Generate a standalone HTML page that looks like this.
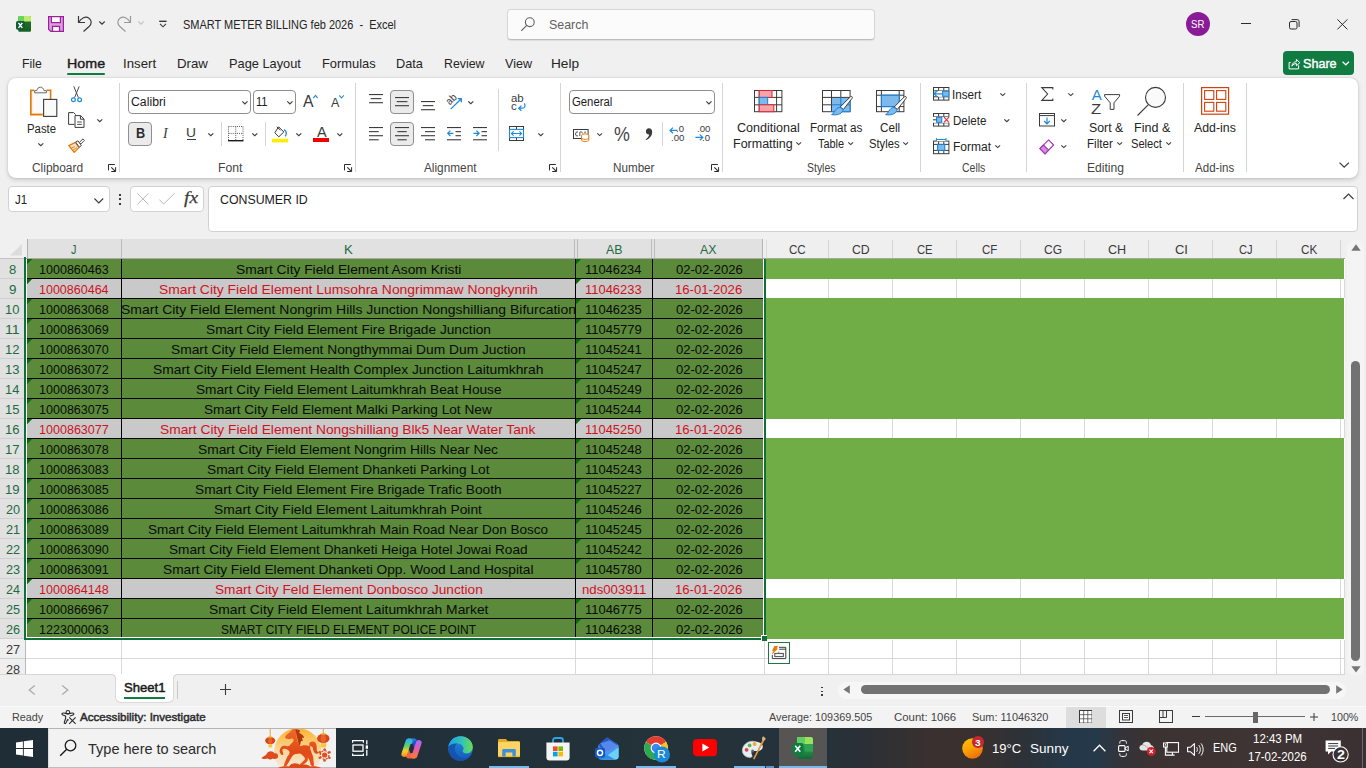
<!DOCTYPE html>
<html><head><meta charset="utf-8"><title>SMART METER BILLING feb 2026 - Excel</title>
<style>
html,body{margin:0;padding:0}
body{width:1366px;height:768px;overflow:hidden;position:relative;background:#f0f0f0;font-family:"Liberation Sans",sans-serif;}
.t{position:absolute;white-space:nowrap;line-height:1;transform-origin:0 50%;}
.r{position:absolute;box-sizing:border-box;}
svg{overflow:visible}
</style></head><body>
<svg class="r" style="left:16px;top:16px;" width="15" height="16" viewBox="0 0 15 16"><defs><linearGradient id="xs" x1="0" y1="0" x2="0" y2="1"><stop offset="0" stop-color="#25732f"/><stop offset="1" stop-color="#17601f"/></linearGradient></defs><path d="M2.200 1.600C2.200 .6 2.800 0 3.800 0H13.400C14.400 0 15 .6 15 1.600V14.200C15 15.200 14.400 15.800 13.400 15.800H3.800C2.800 15.800 2.200 15.200 2.200 14.200z" fill="url(#xs)"/><path d="M2.200 1.600C2.200 .6 2.800 0 3.800 0H8V5.400H2.200z" fill="#6bd45a"/><path d="M8 0H13.400C14.400 0 15 .6 15 1.600V5.400H8z" fill="#bdec70"/><rect x="0" y="5" width="8.800" height="8.800" rx="1.700" fill="#0f5c36"/><path d="M2.500 6.900L6.300 11.900M6.300 6.900L2.500 11.900" stroke="#fff" stroke-width="1.500"/></svg>
<svg class="r" style="left:48px;top:16px;" width="16" height="16" viewBox="0 0 16 16"><path d="M.6 .6H15.400V15.400H2.800L.6 13.200z" fill="#dc9be0" stroke="#9a1f9a" stroke-width="1.200"/><rect x="3.400" y=".6" width="9" height="6" fill="#fbfbfb" stroke="#9a1f9a" stroke-width="1.200"/><rect x="4.500" y="10.400" width="7" height="5" fill="#fbfbfb" stroke="#9a1f9a" stroke-width="1.200"/></svg>
<svg class="r" style="left:77px;top:15px;" width="16" height="17" viewBox="0 0 16 17"><path d="M1.5 1v6.5H8" fill="none" stroke="#3b3b3b" stroke-width="1.2"/><path d="M1.8 7.3C4 3 8.5 .8 12 3.2c3 2.2 2.6 5.6 .4 8L6.5 16.5" fill="none" stroke="#3b3b3b" stroke-width="1.2"/></svg>
<svg class="r" style="left:98.5px;top:21px;" width="6" height="4" viewBox="0 0 6 4"><path d="M.3 .5L3 3.2 5.7 .5" fill="none" stroke="#3b3b3b" stroke-width="1.1"/></svg>
<svg class="r" style="left:116px;top:15px;" width="16" height="17" viewBox="0 0 16 17"><path d="M14.5 1v6.5H8" fill="none" stroke="#999" stroke-width="1.2"/><path d="M14.2 7.3C12 3 7.5 .8 4 3.2c-3 2.2-2.6 5.6-.4 8L9.5 16.5" fill="none" stroke="#999" stroke-width="1.2"/></svg>
<svg class="r" style="left:137.7px;top:21px;" width="6" height="4" viewBox="0 0 6 4"><path d="M.3 .5L3 3.2 5.7 .5" fill="none" stroke="#c4c4c4" stroke-width="1.1"/></svg>
<svg class="r" style="left:159px;top:20px;" width="8" height="8" viewBox="0 0 8 8"><path d="M.2 1.300h7.400" stroke="#2b2b2b" stroke-width="1.300"/><path d="M1 3.8L4 6.8 7 3.8" fill="none" stroke="#3b3b3b" stroke-width="1.1"/></svg>
<span class="t" style="left:182.53px;top:18.00px;font-size:13px;color:#242424;transform:scaleX(0.8438);white-space:pre;">SMART METER BILLING feb 2026  -  Excel</span>
<div class="r" style="left:507px;top:9px;width:368px;height:30.5px;background:#fbfbfb;border:1px solid #d6d6d6;border-bottom-color:#bdbdbd;border-radius:4px;box-shadow:0 1px 1px rgba(0,0,0,.08);"></div>
<svg class="r" style="left:520px;top:16px;" width="16" height="16" viewBox="0 0 16 16"><circle cx="9.8" cy="6.2" r="4.4" fill="none" stroke="#616161" stroke-width="1.1"/><path d="M6.7 9.4L1.3 14.8" stroke="#616161" stroke-width="1.2"/></svg>
<span class="t" style="left:548.96px;top:18.00px;font-size:13px;color:#616161;transform:scaleX(0.9539);">Search</span>
<div class="r" style="left:1186px;top:12px;width:24px;height:24px;background:#8a1b97;border-radius:50%;"></div>
<span class="t" style="left:1191.33px;top:20.00px;font-size:10px;color:#fff;transform:scaleX(0.9582);">SR</span>
<div class="r" style="left:1241px;top:23px;width:10px;height:1px;background:#2b2b2b;"></div>
<svg class="r" style="left:1288.5px;top:18.5px;" width="11" height="11" viewBox="0 0 11 11"><rect x=".5" y="2.5" width="7.5" height="7.5" rx="1.5" fill="none" stroke="#2b2b2b" stroke-width="1"/><path d="M2.6 .6H8.2a1.9 1.9 0 0 1 1.9 1.9V8" fill="none" stroke="#2b2b2b" stroke-width="1"/></svg>
<svg class="r" style="left:1337px;top:18.5px;" width="11" height="11" viewBox="0 0 11 11"><path d="M.4 .4L10.4 10.4M10.4 .4L.4 10.4" stroke="#2b2b2b" stroke-width="1"/></svg>
<div class="r" style="left:1283px;top:51px;width:71px;height:24px;background:#107c41;border-radius:4px;"></div>
<svg class="r" style="left:1287.5px;top:56.5px;" width="13" height="13" viewBox="0 0 13 13"><path d="M2.7 5.5H1.1V11.9H10.6V8.3" fill="none" stroke="#fff" stroke-width="1"/><path d="M3.9 9.2C4.3 6.3 6 4.8 8.4 4.7V2.4L11.9 5.6 8.4 8.8V6.6C6.6 6.5 5 7.4 3.9 9.2z" fill="none" stroke="#fff" stroke-width="1" stroke-linejoin="round"/></svg>
<span class="t" style="left:1303.46px;top:57.00px;font-size:13px;color:#fff;transform:scaleX(0.9677);-webkit-text-stroke:.4px #fff;">Share</span>
<svg class="r" style="left:1342px;top:61px;" width="8" height="5" viewBox="0 0 8 5"><path d="M.6 .7L3.8 3.8 7 .7" fill="none" stroke="#fff" stroke-width="1.2"/></svg>
<span class="t" style="left:21.90px;top:57.00px;font-size:13px;color:#242424;transform:scaleX(0.9409);">File</span>
<span class="t" style="left:123.49px;top:57.00px;font-size:13px;color:#242424;transform:scaleX(1.0168);">Insert</span>
<span class="t" style="left:176.72px;top:57.00px;font-size:13px;color:#242424;transform:scaleX(1.0197);">Draw</span>
<span class="t" style="left:228.55px;top:57.00px;font-size:13px;color:#242424;transform:scaleX(0.9848);">Page Layout</span>
<span class="t" style="left:321.75px;top:57.00px;font-size:13px;color:#242424;transform:scaleX(0.9909);">Formulas</span>
<span class="t" style="left:395.96px;top:57.00px;font-size:13px;color:#242424;transform:scaleX(0.9804);">Data</span>
<span class="t" style="left:443.89px;top:57.00px;font-size:13px;color:#242424;transform:scaleX(0.9493);">Review</span>
<span class="t" style="left:504.60px;top:57.00px;font-size:13px;color:#242424;transform:scaleX(0.9646);">View</span>
<span class="t" style="left:550.68px;top:57.00px;font-size:13px;color:#242424;transform:scaleX(1.0505);">Help</span>
<span class="t" style="left:66.83px;top:57.00px;font-size:13px;color:#1b1b1b;transform:scaleX(1.0976);-webkit-text-stroke:.38px #1b1b1b;">Home</span>
<div class="r" style="left:67px;top:73px;width:38px;height:2px;background:#107c41;border-radius:1px;"></div>
<div class="r" style="left:8px;top:78px;width:1350px;height:100px;background:#ffffff;border-radius:8px;box-shadow:0 1.500px 4px rgba(0,0,0,.17),0 0 1.500px rgba(0,0,0,.14);"></div>
<div class="r" style="left:119px;top:83px;width:1px;height:89px;background:#d4d4d4;"></div>
<div class="r" style="left:355px;top:83px;width:1px;height:89px;background:#d4d4d4;"></div>
<div class="r" style="left:560px;top:83px;width:1px;height:89px;background:#d4d4d4;"></div>
<div class="r" style="left:722px;top:83px;width:1px;height:89px;background:#d4d4d4;"></div>
<div class="r" style="left:920px;top:83px;width:1px;height:89px;background:#d4d4d4;"></div>
<div class="r" style="left:1026px;top:83px;width:1px;height:89px;background:#d4d4d4;"></div>
<div class="r" style="left:1183px;top:83px;width:1px;height:89px;background:#d4d4d4;"></div>
<div class="r" style="left:1246px;top:83px;width:1px;height:89px;background:#d4d4d4;"></div>
<span class="t" style="left:31.94px;top:162.00px;font-size:12px;color:#444444;transform:scaleX(0.9947);">Clipboard</span>
<span class="t" style="left:217.55px;top:162.00px;font-size:12px;color:#444444;transform:scaleX(1.0178);">Font</span>
<span class="t" style="left:424.30px;top:162.00px;font-size:12px;color:#444444;transform:scaleX(0.9835);">Alignment</span>
<span class="t" style="left:612.69px;top:162.00px;font-size:12px;color:#444444;transform:scaleX(0.9721);">Number</span>
<span class="t" style="left:807.16px;top:162.00px;font-size:12px;color:#444444;transform:scaleX(0.8710);">Styles</span>
<span class="t" style="left:962.41px;top:162.00px;font-size:12px;color:#444444;transform:scaleX(0.8743);">Cells</span>
<span class="t" style="left:1086.95px;top:162.00px;font-size:12px;color:#444444;transform:scaleX(1.0081);">Editing</span>
<span class="t" style="left:1195.30px;top:162.00px;font-size:12px;color:#444444;transform:scaleX(0.9625);">Add-ins</span>
<svg class="r" style="left:108px;top:164px;" width="8" height="8" viewBox="0 0 8 8"><path d="M.5 6.400V.5H6.800" fill="none" stroke="#2b2b2b" stroke-width="1"/><path d="M3.300 3.400L7.400 7.400" stroke="#2b2b2b" stroke-width="1.100"/><path d="M7.600 3.200V7.500H3.200" fill="none" stroke="#2b2b2b" stroke-width="1"/></svg>
<svg class="r" style="left:344px;top:164px;" width="8" height="8" viewBox="0 0 8 8"><path d="M.5 6.400V.5H6.800" fill="none" stroke="#2b2b2b" stroke-width="1"/><path d="M3.300 3.400L7.400 7.400" stroke="#2b2b2b" stroke-width="1.100"/><path d="M7.600 3.200V7.500H3.200" fill="none" stroke="#2b2b2b" stroke-width="1"/></svg>
<svg class="r" style="left:549px;top:164px;" width="8" height="8" viewBox="0 0 8 8"><path d="M.5 6.400V.5H6.800" fill="none" stroke="#2b2b2b" stroke-width="1"/><path d="M3.300 3.400L7.400 7.400" stroke="#2b2b2b" stroke-width="1.100"/><path d="M7.600 3.200V7.500H3.200" fill="none" stroke="#2b2b2b" stroke-width="1"/></svg>
<svg class="r" style="left:711px;top:164px;" width="8" height="8" viewBox="0 0 8 8"><path d="M.5 6.400V.5H6.800" fill="none" stroke="#2b2b2b" stroke-width="1"/><path d="M3.300 3.400L7.400 7.400" stroke="#2b2b2b" stroke-width="1.100"/><path d="M7.600 3.200V7.500H3.200" fill="none" stroke="#2b2b2b" stroke-width="1"/></svg>
<svg class="r" style="left:30px;top:86px;" width="28" height="32" viewBox="0 0 28 32"><path d="M4 4.200H.8V28.600H12.800" fill="#fbe3b0" stroke="#e07a10" stroke-width="1.600"/><path d="M17 4.200H20.600V13" fill="none" stroke="#e07a10" stroke-width="1.600"/><rect x="2.400" y="6" width="10.600" height="21" fill="#fafafa"/><path d="M4.600 6.800V4.600H6.800C7.200 2.600 8.400 1.200 10.400 1.200 12.400 1.200 13.600 2.600 14 4.600H16.600V6.800z" fill="#fafafa" stroke="#6a6a6a" stroke-width="1"/><rect x="13.600" y="13.400" width="13.200" height="17" fill="#fafafa" stroke="#3b3b3b" stroke-width="1.100"/></svg>
<span class="t" style="left:26.61px;top:123.00px;font-size:12px;color:#242424;transform:scaleX(0.9466);">Paste</span>
<svg class="r" style="left:37.7px;top:143px;" width="5.6" height="3" viewBox="0 0 5.6 3"><path d="M.3 .3L2.8 2.7L5.3 .3" fill="none" stroke="#3b3b3b" stroke-width="1.1"/></svg>
<svg class="r" style="left:70.5px;top:86px;" width="11" height="16.5" viewBox="0 0 11 16.5"><path d="M2.800 .4L7.400 11.600M8.200 .4L3.600 11.600" stroke="#4a4a4a" stroke-width="1"/><circle cx="2.400" cy="13.800" r="1.900" fill="none" stroke="#1e8ad6" stroke-width="1.200"/><circle cx="8.600" cy="13.800" r="1.900" fill="none" stroke="#1e8ad6" stroke-width="1.200"/></svg>
<svg class="r" style="left:67.5px;top:112px;" width="17" height="16" viewBox="0 0 17 16"><path d="M6.400 12.400H.6V.6H5.600L7.600 2.600" fill="none" stroke="#3b3b3b" stroke-width="1"/><path d="M7 3.600H12.600L16 7V15.400H7z" fill="#fff" stroke="#3b3b3b" stroke-width="1"/><path d="M12.400 3.800V7.200H15.800" fill="none" stroke="#3b3b3b" stroke-width="1"/><path d="M9.200 10H13.800M9.200 12.400H13.800" stroke="#3b3b3b" stroke-width=".9"/></svg>
<svg class="r" style="left:96.7px;top:119.3px;" width="5.6" height="3" viewBox="0 0 5.6 3"><path d="M.3 .3L2.8 2.7L5.3 .3" fill="none" stroke="#3b3b3b" stroke-width="1.1"/></svg>
<svg class="r" style="left:68px;top:138px;" width="17" height="15" viewBox="0 0 17 15"><path d="M.8 7.600L7.400 4.400 11 9.600 6.200 14.400z" fill="#fbe3c8" stroke="#e07a10" stroke-width="1.300" stroke-linejoin="round"/><path d="M3 10.200L7 8.600M4.600 12.400L9 9.600" stroke="#e07a10" stroke-width=".9"/><path d="M7.600 4L10 2.800 13.400 7.600 11.200 9.200z" fill="#fff" stroke="#4a4a4a" stroke-width="1"/><path d="M11.400 4.400L15 .8 16.400 2.400 12.800 6z" fill="#fff" stroke="#4a4a4a" stroke-width="1"/></svg>
<div class="r" style="left:128px;top:90px;width:123px;height:24px;background:#fff;border:1px solid #8f8f8f;border-radius:4px;"></div>
<span class="t" style="left:131.12px;top:96.00px;font-size:12px;color:#1b1b1b;transform:scaleX(1.0228);">Calibri</span>
<svg class="r" style="left:241.7px;top:101px;" width="5.8" height="3.2" viewBox="0 0 5.8 3.2"><path d="M.3 .3L2.9 2.9L5.5 .3" fill="none" stroke="#3b3b3b" stroke-width="1.1"/></svg>
<div class="r" style="left:253px;top:90px;width:43px;height:24px;background:#fff;border:1px solid #8f8f8f;border-radius:4px;"></div>
<span class="t" style="left:255.99px;top:96.00px;font-size:12px;color:#1b1b1b;transform:scaleX(0.9245);">11</span>
<svg class="r" style="left:286.5px;top:101px;" width="5.8" height="3.2" viewBox="0 0 5.8 3.2"><path d="M.3 .3L2.9 2.9L5.5 .3" fill="none" stroke="#3b3b3b" stroke-width="1.1"/></svg>
<span class="t" style="left:303.30px;top:93.00px;font-size:16.5px;color:#3b3b3b;transform:scaleX(0.9562);">A</span>
<svg class="r" style="left:313.2px;top:95px;" width="5" height="3.4" viewBox="0 0 5 3.4"><path d="M.3 3.100L2.500 .4 4.700 3.100" fill="none" stroke="#1e8ad6" stroke-width="1.100"/></svg>
<span class="t" style="left:330.60px;top:96.00px;font-size:13.3px;color:#3b3b3b;transform:scaleX(0.9465);">A</span>
<svg class="r" style="left:338.8px;top:95px;" width="5" height="3.4" viewBox="0 0 5 3.4"><path d="M.3 .3L2.500 3 4.700 .3" fill="none" stroke="#1e8ad6" stroke-width="1.100"/></svg>
<div class="r" style="left:128px;top:122px;width:24px;height:24px;background:#ebebeb;border:1px solid #8f8f8f;border-radius:4px;"></div>
<span class="t" style="left:135.61px;top:126.00px;font-size:14px;color:#2b2b2b;transform:scaleX(0.9043);font-weight:bold;">B</span>
<span class="t" style="left:163.06px;top:127.00px;font-size:14px;color:#3b3b3b;font-family:'Liberation Serif',serif;font-style:italic;">I</span>
<span class="t" style="left:186.39px;top:127.00px;font-size:12px;color:#3b3b3b;transform:scaleX(1.1491);">U</span>
<div class="r" style="left:187.4px;top:139px;width:8.6px;height:1px;background:#3b3b3b;"></div>
<svg class="r" style="left:207.7px;top:133px;" width="5.6" height="3" viewBox="0 0 5.6 3"><path d="M.3 .3L2.8 2.7L5.3 .3" fill="none" stroke="#3b3b3b" stroke-width="1.1"/></svg>
<div class="r" style="left:221px;top:122px;width:1px;height:24px;background:#d4d4d4;"></div>
<svg class="r" style="left:228px;top:125.5px;" width="15.5" height="15.5" viewBox="0 0 15.5 15.5"><path d="M.5 .5H15M.5 .5V14M15 .5V14M7.750 .5V14M.5 7.400H15" fill="none" stroke="#5a5a5a" stroke-width="1" stroke-dasharray="1 1.100"/><path d="M0 14.700H15.500" stroke="#1b1b1b" stroke-width="1.400"/></svg>
<svg class="r" style="left:251.6px;top:133px;" width="5.6" height="3" viewBox="0 0 5.6 3"><path d="M.3 .3L2.8 2.7L5.3 .3" fill="none" stroke="#3b3b3b" stroke-width="1.1"/></svg>
<div class="r" style="left:265px;top:122px;width:1px;height:24px;background:#d4d4d4;"></div>
<svg class="r" style="left:272px;top:125.5px;" width="16.5" height="16.5" viewBox="0 0 16.5 16.5"><path d="M6.600 .8L11.800 6 6.800 10.800 2.800 6.800z" fill="#fff" stroke="#3b3b3b" stroke-width="1"/><path d="M4.800 .8L8.400 4.200" stroke="#3b3b3b" stroke-width="1"/><path d="M12 3.600C14.400 5 14.600 8 13.400 10.400" fill="none" stroke="#1e8ad6" stroke-width="1.300"/><rect x="0" y="12.800" width="16.200" height="3.600" fill="#ffee00"/></svg>
<svg class="r" style="left:295.5px;top:133px;" width="5.6" height="3" viewBox="0 0 5.6 3"><path d="M.3 .3L2.8 2.7L5.3 .3" fill="none" stroke="#3b3b3b" stroke-width="1.1"/></svg>
<span class="t" style="left:316.50px;top:125.00px;font-size:14.5px;color:#3b3b3b;transform:scaleX(1.0013);">A</span>
<div class="r" style="left:313px;top:138.2px;width:16px;height:3.6px;background:#f20000;"></div>
<svg class="r" style="left:336.6px;top:133px;" width="5.6" height="3" viewBox="0 0 5.6 3"><path d="M.3 .3L2.8 2.7L5.3 .3" fill="none" stroke="#3b3b3b" stroke-width="1.1"/></svg>
<div class="r" style="left:390px;top:90px;width:24px;height:24px;background:#ebebeb;border:1px solid #8f8f8f;border-radius:4px;"></div>
<div class="r" style="left:390px;top:122px;width:24px;height:24px;background:#ebebeb;border:1px solid #8f8f8f;border-radius:4px;"></div>
<svg class="r" style="left:369px;top:93.8px;" width="15" height="18" viewBox="0 0 15 18"><path d="M0 0.55H14" stroke="#3b3b3b" stroke-width="1.100"/><path d="M1.7 4.63H12.4" stroke="#3b3b3b" stroke-width="1.100"/><path d="M0 8.71H14" stroke="#3b3b3b" stroke-width="1.100"/></svg>
<svg class="r" style="left:395px;top:96.9px;" width="15" height="18" viewBox="0 0 15 18"><path d="M0 0.55H14" stroke="#3b3b3b" stroke-width="1.100"/><path d="M1.7 4.63H12.4" stroke="#3b3b3b" stroke-width="1.100"/><path d="M0 8.71H14" stroke="#3b3b3b" stroke-width="1.100"/></svg>
<svg class="r" style="left:421.2px;top:101px;" width="15" height="18" viewBox="0 0 15 18"><path d="M0 0.55H14" stroke="#3b3b3b" stroke-width="1.100"/><path d="M1.7 4.63H12.4" stroke="#3b3b3b" stroke-width="1.100"/><path d="M0 8.71H14" stroke="#3b3b3b" stroke-width="1.100"/></svg>
<svg class="r" style="left:369px;top:126.8px;" width="15" height="18" viewBox="0 0 15 18"><path d="M0 0.55H14" stroke="#3b3b3b" stroke-width="1.100"/><path d="M0 4.63H9.7" stroke="#3b3b3b" stroke-width="1.100"/><path d="M0 8.71H14" stroke="#3b3b3b" stroke-width="1.100"/><path d="M0 12.79H9.7" stroke="#3b3b3b" stroke-width="1.100"/></svg>
<svg class="r" style="left:395px;top:126.8px;" width="15" height="18" viewBox="0 0 15 18"><path d="M0 0.55H14" stroke="#3b3b3b" stroke-width="1.100"/><path d="M2.4 4.63H11.7" stroke="#3b3b3b" stroke-width="1.100"/><path d="M0 8.71H14" stroke="#3b3b3b" stroke-width="1.100"/><path d="M2.4 12.79H11.7" stroke="#3b3b3b" stroke-width="1.100"/></svg>
<svg class="r" style="left:421.2px;top:126.8px;" width="15" height="18" viewBox="0 0 15 18"><path d="M0 0.55H14" stroke="#3b3b3b" stroke-width="1.100"/><path d="M4 4.63H14" stroke="#3b3b3b" stroke-width="1.100"/><path d="M0 8.71H14" stroke="#3b3b3b" stroke-width="1.100"/><path d="M4 12.79H14" stroke="#3b3b3b" stroke-width="1.100"/></svg>
<svg class="r" style="left:447px;top:126.8px;" width="15" height="18" viewBox="0 0 15 18"><path d="M0 0.55H14" stroke="#3b3b3b" stroke-width="1.100"/><path d="M8.5 4.63H14" stroke="#3b3b3b" stroke-width="1.100"/><path d="M8.5 8.71H14" stroke="#3b3b3b" stroke-width="1.100"/><path d="M0 12.79H14" stroke="#3b3b3b" stroke-width="1.100"/></svg>
<svg class="r" style="left:447px;top:130.3px;" width="7" height="7" viewBox="0 0 7 7"><path d="M6.400 3.300H.8M3.400 .6L.7 3.300 3.400 6" fill="none" stroke="#1e8ad6" stroke-width="1.200"/></svg>
<svg class="r" style="left:473.1px;top:126.8px;" width="15" height="18" viewBox="0 0 15 18"><path d="M0 0.55H14" stroke="#3b3b3b" stroke-width="1.100"/><path d="M8.5 4.63H14" stroke="#3b3b3b" stroke-width="1.100"/><path d="M8.5 8.71H14" stroke="#3b3b3b" stroke-width="1.100"/><path d="M0 12.79H14" stroke="#3b3b3b" stroke-width="1.100"/></svg>
<svg class="r" style="left:473px;top:130.3px;" width="7" height="7" viewBox="0 0 7 7"><path d="M.4 3.300H6M3.400 .6L6.100 3.300 3.400 6" fill="none" stroke="#1e8ad6" stroke-width="1.200"/></svg>
<span class="t" style="left:451.300px;top:99.300px;font-size:10.500px;color:#3b3b3b;transform:translate(-50%,-50%) rotate(-45deg) scaleX(.92);transform-origin:50% 50%;">ab</span>
<svg class="r" style="left:449.8px;top:97.5px;" width="12" height="12" viewBox="0 0 12 12"><path d="M.7 11.100L11.300 .7M7.800 .7H11.300V4.200" fill="none" stroke="#1e8ad6" stroke-width="1.300"/></svg>
<svg class="r" style="left:467.5px;top:100.7px;" width="5.6" height="3" viewBox="0 0 5.6 3"><path d="M.3 .3L2.8 2.7L5.3 .3" fill="none" stroke="#3b3b3b" stroke-width="1.1"/></svg>
<div class="r" style="left:498px;top:89px;width:1px;height:62px;background:#d4d4d4;"></div>
<span class="t" style="left:510.62px;top:93.00px;font-size:10.5px;color:#3b3b3b;transform:scaleX(1.0886);">ab</span>
<span class="t" style="left:510.62px;top:101.00px;font-size:10.5px;color:#3b3b3b;transform:scaleX(1.0959);">c</span>
<svg class="r" style="left:517.5px;top:102.5px;" width="8" height="8" viewBox="0 0 8 8"><path d="M6.400 .4C7.600 2.600 7 5.200 4.400 5.200H.8M3.400 2.600L.7 5.200 3.400 7.800" fill="none" stroke="#1e8ad6" stroke-width="1.200"/></svg>
<svg class="r" style="left:509px;top:126px;" width="15" height="15" viewBox="0 0 15 15"><rect x=".5" y=".5" width="14" height="14" fill="none" stroke="#3b3b3b" stroke-width="1"/><path d="M7.500 .5V3.400M7.500 11.600V14.500" stroke="#3b3b3b" stroke-width="1"/><rect x=".5" y="3.400" width="14" height="8.200" fill="#fff" stroke="#1e8ad6" stroke-width="1.100"/><path d="M2.600 7.500H12.400M4.600 5.400L2.400 7.500 4.600 9.600M10.400 5.400L12.600 7.500 10.400 9.600" fill="none" stroke="#1e8ad6" stroke-width="1.100"/></svg>
<svg class="r" style="left:537.7px;top:133px;" width="5.6" height="3" viewBox="0 0 5.6 3"><path d="M.3 .3L2.8 2.7L5.3 .3" fill="none" stroke="#3b3b3b" stroke-width="1.1"/></svg>
<div class="r" style="left:569px;top:90px;width:146px;height:24px;background:#fff;border:1px solid #8f8f8f;border-radius:4px;"></div>
<span class="t" style="left:572.27px;top:96.00px;font-size:12px;color:#1b1b1b;transform:scaleX(0.9434);">General</span>
<svg class="r" style="left:705.5px;top:100.8px;" width="5.8" height="3.2" viewBox="0 0 5.8 3.2"><path d="M.3 .3L2.9 2.9L5.5 .3" fill="none" stroke="#3b3b3b" stroke-width="1.1"/></svg>
<svg class="r" style="left:573px;top:129px;" width="16.5" height="13" viewBox="0 0 16.5 13"><rect x=".5" y=".5" width="14.600" height="9" fill="#fff" stroke="#3b3b3b" stroke-width="1"/><path d="M5 3C3.400 2.400 2.600 3.600 2.600 5 2.600 6.400 3.400 7.400 5 6.800M6.800 7V3.200C8 2.600 9.400 2.800 9.400 4.400M11.200 3.200H13" fill="none" stroke="#3b3b3b" stroke-width=".9"/><ellipse cx="12.200" cy="6.400" rx="3.600" ry="1.500" fill="#fff" stroke="#e07a10" stroke-width="1"/><path d="M8.600 6.400V11C8.600 12 10.200 12.600 12.200 12.600 14.200 12.600 15.800 12 15.800 11V6.400M8.600 8.800C8.600 9.800 10.200 10.400 12.200 10.400 14.200 10.400 15.800 9.800 15.800 8.800" fill="#fff" stroke="#e07a10" stroke-width="1"/></svg>
<svg class="r" style="left:596.8px;top:133px;" width="5.4" height="2.9" viewBox="0 0 5.4 2.9"><path d="M.3 .3L2.7 2.6L5.1 .3" fill="none" stroke="#3b3b3b" stroke-width="1.1"/></svg>
<span class="t" style="left:614.24px;top:125.00px;font-size:19.5px;color:#444;transform:scaleX(0.9165);">%</span>
<svg class="r" style="left:644.8px;top:128px;" width="7.5" height="12.5" viewBox="0 0 7.5 12.5"><path d="M3.800 .3C6 .3 7.200 1.800 7.200 4 7.200 7.400 4.800 10.600 1 12L.6 11.200C2.800 10 4 8.400 4.200 6.600 2.400 6.800 .9 5.600 .9 3.600 .9 1.700 2.100 .3 3.800 .3z" fill="#3b3b3b"/></svg>
<div class="r" style="left:662px;top:122px;width:1px;height:24px;background:#d4d4d4;"></div>
<svg class="r" style="left:669px;top:126.8px;" width="16" height="14.5" viewBox="0 0 16 14.5"><path d="M8.400 3.400H1.200M4 .6L1 3.400 4 6.200" fill="none" stroke="#1e8ad6" stroke-width="1.200"/></svg>
<span class="t" style="left:676.46px;top:125.00px;font-size:8.5px;color:#3b3b3b;transform:scaleX(1.1241);">.0</span>
<span class="t" style="left:670.95px;top:134.00px;font-size:8.5px;color:#3b3b3b;transform:scaleX(1.1321);">.00</span>
<span class="t" style="left:696.95px;top:125.00px;font-size:8.5px;color:#3b3b3b;transform:scaleX(1.1321);">.00</span>
<svg class="r" style="left:695px;top:134.2px;" width="9" height="7" viewBox="0 0 9 7"><path d="M.4 3.400H7.600M4.800 .6L7.800 3.400 4.800 6.200" fill="none" stroke="#1e8ad6" stroke-width="1.200"/></svg>
<span class="t" style="left:702.16px;top:134.00px;font-size:8.5px;color:#3b3b3b;transform:scaleX(1.1241);">.0</span>
<svg class="r" style="left:754px;top:90px;" width="28" height="22" viewBox="0 0 28 22"><rect x=".5" y=".5" width="27.400" height="21.200" fill="#fff" stroke="#3b3b3b" stroke-width="1"/><path d="M5.200 .5V21.700M22.600 .5V21.700M.5 7.400H28M.5 14.800H28" stroke="#3b3b3b" stroke-width="1"/><rect x="5.200" y=".5" width="12.800" height="6.900" fill="#f7a3aa" stroke="#e32230" stroke-width="1"/><rect x="5.200" y="7.400" width="8.500" height="7.400" fill="#7cb9ec" stroke="#1a7fd4" stroke-width="1"/><rect x="5.200" y="14.800" width="14.600" height="6.900" fill="#f7a3aa" stroke="#e32230" stroke-width="1"/></svg>
<span class="t" style="left:736.81px;top:122.00px;font-size:12px;color:#242424;transform:scaleX(1.0445);">Conditional</span>
<span class="t" style="left:732.52px;top:138.00px;font-size:12px;color:#242424;transform:scaleX(1.0417);">Formatting</span>
<svg class="r" style="left:796px;top:142px;" width="5.4" height="2.9" viewBox="0 0 5.4 2.9"><path d="M.3 .3L2.7 2.6L5.1 .3" fill="none" stroke="#3b3b3b" stroke-width="1.1"/></svg>
<svg class="r" style="left:822px;top:90px;" width="31" height="27" viewBox="0 0 31 27"><rect x=".5" y=".5" width="27.600" height="21.200" fill="#fff" stroke="#3b3b3b" stroke-width="1"/><rect x="9.500" y="7.400" width="18.600" height="14.300" fill="#7cb9ec"/><path d="M9.500 .5V21.700M18.800 .5V7.400M.5 7.400H28M.5 14.800H9.500" stroke="#3b3b3b" stroke-width="1"/><path d="M18.800 7.400V21.700M9.500 14.800H28M9.500 21.700H28M28 7.400V21.700" stroke="#1a7fd4" stroke-width="1"/><path d="M28.600 6.600C29.600 6 30.800 7 30.200 8.200L21.400 19.400 18.200 17z" fill="#fff" stroke="#3b3b3b" stroke-width="1"/><path d="M18 17.200L21.200 19.600C20.600 23 16.600 25.800 9.600 24.600 12.600 23.600 12.400 18.400 18 17.200z" fill="#7cb9ec" stroke="#1a7fd4" stroke-width="1"/></svg>
<span class="t" style="left:809.79px;top:122.00px;font-size:12px;color:#242424;transform:scaleX(0.9678);">Format as</span>
<span class="t" style="left:818.17px;top:138.00px;font-size:12px;color:#242424;transform:scaleX(0.9087);">Table</span>
<svg class="r" style="left:848px;top:142px;" width="5.4" height="2.9" viewBox="0 0 5.4 2.9"><path d="M.3 .3L2.7 2.6L5.1 .3" fill="none" stroke="#3b3b3b" stroke-width="1.1"/></svg>
<svg class="r" style="left:876px;top:90px;" width="31" height="27" viewBox="0 0 31 27"><rect x=".5" y=".5" width="27.400" height="21.200" fill="#fff" stroke="#3b3b3b" stroke-width="1"/><path d="M5.400 .5V21.700M23.200 .5V21.700M.5 5.200H28M.5 16.600H28" stroke="#3b3b3b" stroke-width="1"/><rect x="5.400" y="5.200" width="17.800" height="11.400" fill="#7cb9ec" stroke="#1a7fd4" stroke-width="1.100"/><path d="M28.600 6.600C29.600 6 30.800 7 30.200 8.200L21.400 19.400 18.200 17z" fill="#fff" stroke="#3b3b3b" stroke-width="1"/><path d="M18 17.200L21.200 19.600C20.600 23 16.600 25.800 9.600 24.600 12.600 23.600 12.400 18.400 18 17.200z" fill="#7cb9ec" stroke="#1a7fd4" stroke-width="1"/></svg>
<span class="t" style="left:880.05px;top:122.00px;font-size:12px;color:#242424;transform:scaleX(0.9732);">Cell</span>
<span class="t" style="left:868.93px;top:138.00px;font-size:12px;color:#242424;transform:scaleX(0.9339);">Styles</span>
<svg class="r" style="left:902.9px;top:142px;" width="5.4" height="2.9" viewBox="0 0 5.4 2.9"><path d="M.3 .3L2.7 2.6L5.1 .3" fill="none" stroke="#3b3b3b" stroke-width="1.1"/></svg>
<svg class="r" style="left:932.9px;top:87.3px;" width="17" height="14" viewBox="0 0 17 14"><rect x=".5" y=".5" width="15.400" height="12.600" fill="#fff" stroke="#3b3b3b" stroke-width="1"/><path d="M5.600 .5V13M10.800 .5V13M.5 3.800H16M.5 9.800H16" stroke="#3b3b3b" stroke-width="1"/><rect x="5" y="3.800" width="11.400" height="6" fill="#fff"/><rect x="9.600" y="4.300" width="6.400" height="5" fill="#7cb9ec" stroke="#1a7fd4" stroke-width="1"/><path d="M9 6.800H1M3.800 4.200L1 6.800 3.800 9.400" fill="none" stroke="#1e8ad6" stroke-width="1.200"/></svg>
<span class="t" style="left:952.47px;top:89.00px;font-size:12px;color:#242424;transform:scaleX(0.9735);">Insert</span>
<svg class="r" style="left:999.5px;top:93px;" width="5.5" height="2.9" viewBox="0 0 5.5 2.9"><path d="M.3 .3L2.75 2.6L5.2 .3" fill="none" stroke="#3b3b3b" stroke-width="1.1"/></svg>
<svg class="r" style="left:932.9px;top:113.3px;" width="17" height="14" viewBox="0 0 17 14"><rect x=".5" y=".5" width="15.400" height="12.600" fill="#fff" stroke="#3b3b3b" stroke-width="1"/><path d="M5.600 .5V13M10.800 .5V13M.5 3.800H16M.5 9.800H16" stroke="#3b3b3b" stroke-width="1"/><rect x="-.5" y="3.800" width="17.500" height="6" fill="#fff"/><rect x="3.600" y="4.300" width="5.200" height="5" fill="#7cb9ec" stroke="#1a7fd4" stroke-width="1"/><path d="M0 6.800H3.600" stroke="#3b3b3b" stroke-width="1"/><path d="M11 4.200L16 9.400M16 4.200L11 9.400" stroke="#e8323c" stroke-width="1.200"/></svg>
<span class="t" style="left:952.90px;top:115.00px;font-size:12px;color:#242424;transform:scaleX(0.9620);">Delete</span>
<svg class="r" style="left:1003.5px;top:119px;" width="5.6" height="3" viewBox="0 0 5.6 3"><path d="M.3 .3L2.8 2.7L5.3 .3" fill="none" stroke="#3b3b3b" stroke-width="1.1"/></svg>
<svg class="r" style="left:932.9px;top:138.3px;" width="17" height="16" viewBox="0 0 17 16"><g transform="translate(0,2.600)"><rect x=".5" y=".5" width="15.400" height="12.600" fill="#fff" stroke="#3b3b3b" stroke-width="1"/><path d="M5.600 .5V13M10.800 .5V13M.5 3.800H16M.5 9.800H16" stroke="#3b3b3b" stroke-width="1"/></g><rect x="4.600" y="6.400" width="7.200" height="6" fill="#7cb9ec" stroke="#1a7fd4" stroke-width="1"/><rect x="3" y="0" width="10.600" height="3.200" fill="#fff"/><path d="M3.400 1.500H13M3.400 0V3M13 0V3" stroke="#1e8ad6" stroke-width="1"/></svg>
<span class="t" style="left:952.86px;top:141.00px;font-size:12px;color:#242424;transform:scaleX(1.0005);">Format</span>
<svg class="r" style="left:995px;top:144.9px;" width="5.4" height="2.9" viewBox="0 0 5.4 2.9"><path d="M.3 .3L2.7 2.6L5.1 .3" fill="none" stroke="#3b3b3b" stroke-width="1.1"/></svg>
<svg class="r" style="left:1041px;top:87px;" width="12.5" height="14" viewBox="0 0 12.5 14"><path d="M11.800 2.400V.6H.8L6.600 7 .8 13.400H11.800V11.600" fill="none" stroke="#3b3b3b" stroke-width="1.100"/></svg>
<svg class="r" style="left:1067.6px;top:93px;" width="5.6" height="2.9" viewBox="0 0 5.6 2.9"><path d="M.3 .3L2.8 2.6L5.3 .3" fill="none" stroke="#3b3b3b" stroke-width="1.1"/></svg>
<svg class="r" style="left:1039px;top:113.2px;" width="16" height="13.5" viewBox="0 0 16 13.5"><rect x=".5" y=".5" width="15" height="12.500" fill="#fff" stroke="#3b3b3b" stroke-width="1"/><path d="M.5 2.600H15.500" stroke="#3b3b3b" stroke-width="1"/><path d="M8 4.600V10.600M5.200 8L8 10.800 10.800 8" fill="none" stroke="#1e8ad6" stroke-width="1.200"/></svg>
<svg class="r" style="left:1060.8px;top:119px;" width="5.6" height="3" viewBox="0 0 5.6 3"><path d="M.3 .3L2.8 2.7L5.3 .3" fill="none" stroke="#3b3b3b" stroke-width="1.1"/></svg>
<svg class="r" style="left:1039px;top:138.5px;" width="15.5" height="15.5" viewBox="0 0 15.5 15.5"><path d="M9.600 .8L14.600 6 6 14.800 .9 9.600z" fill="#fff" stroke="#a535b4" stroke-width="1.100" stroke-linejoin="round"/><path d="M4.400 6L9.600 11.200 6 14.800 .9 9.600z" fill="#cf8edb" stroke="#a535b4" stroke-width="1.100" stroke-linejoin="round"/></svg>
<svg class="r" style="left:1060.8px;top:144.9px;" width="5.6" height="2.9" viewBox="0 0 5.6 2.9"><path d="M.3 .3L2.8 2.6L5.3 .3" fill="none" stroke="#3b3b3b" stroke-width="1.1"/></svg>
<span class="t" style="left:1091.80px;top:87.00px;font-size:15px;color:#1e8ad6;">A</span>
<span class="t" style="left:1091.32px;top:101.00px;font-size:15px;color:#3b3b3b;transform:scaleX(1.1068);">Z</span>
<svg class="r" style="left:1104.2px;top:94px;" width="16.2" height="16" viewBox="0 0 16.2 16"><path d="M.6 .6H15.600V2.200L10 8.800V15.400H6.200V8.800L.6 2.200z" fill="#fff" stroke="#3b3b3b" stroke-width="1"/></svg>
<span class="t" style="left:1088.69px;top:122.00px;font-size:12px;color:#242424;transform:scaleX(1.0270);">Sort &amp;</span>
<span class="t" style="left:1086.99px;top:138.00px;font-size:12px;color:#242424;transform:scaleX(0.9669);">Filter</span>
<svg class="r" style="left:1116.8px;top:142px;" width="5.4" height="2.9" viewBox="0 0 5.4 2.9"><path d="M.3 .3L2.7 2.6L5.1 .3" fill="none" stroke="#3b3b3b" stroke-width="1.1"/></svg>
<svg class="r" style="left:1137px;top:87px;" width="29" height="29" viewBox="0 0 29 29"><circle cx="18.500" cy="10.400" r="10" fill="#fafafa" stroke="#3b3b3b" stroke-width="1.100"/><path d="M11.400 17.600L.5 28.500" stroke="#3b3b3b" stroke-width="1.100"/></svg>
<span class="t" style="left:1133.62px;top:122.00px;font-size:12px;color:#242424;transform:scaleX(1.0471);">Find &amp;</span>
<span class="t" style="left:1130.84px;top:138.00px;font-size:12px;color:#242424;transform:scaleX(0.9277);">Select</span>
<svg class="r" style="left:1166px;top:142px;" width="5.4" height="2.9" viewBox="0 0 5.4 2.9"><path d="M.3 .3L2.7 2.6L5.1 .3" fill="none" stroke="#3b3b3b" stroke-width="1.1"/></svg>
<svg class="r" style="left:1200.8px;top:87px;" width="28.2" height="27.8" viewBox="0 0 28.2 27.8"><rect x=".6" y=".6" width="27" height="26.600" fill="#fff" stroke="#d1410c" stroke-width="1.200"/><rect x="3.600" y="3.600" width="9.200" height="8.800" fill="none" stroke="#d1410c" stroke-width="1.100"/><rect x="15.600" y="3.600" width="9.200" height="8.800" fill="none" stroke="#d1410c" stroke-width="1.100"/><rect x="3.600" y="15.400" width="9.200" height="8.800" fill="none" stroke="#d1410c" stroke-width="1.100"/><rect x="15.600" y="15.400" width="9.200" height="8.800" fill="none" stroke="#d1410c" stroke-width="1.100"/></svg>
<span class="t" style="left:1194.30px;top:122.00px;font-size:12px;color:#242424;transform:scaleX(1.0295);">Add-ins</span>
<svg class="r" style="left:1338.5px;top:162px;" width="10.5" height="6" viewBox="0 0 10.5 6"><path d="M.5 .6L5.200 5.200 10 .6" fill="none" stroke="#3b3b3b" stroke-width="1.200"/></svg>
<div class="r" style="left:8px;top:186px;width:102px;height:26px;background:#fff;border:1px solid #d2d2d2;border-radius:4px;"></div>
<span class="t" style="left:15.32px;top:194.00px;font-size:12px;color:#242424;transform:scaleX(0.9634);">J1</span>
<svg class="r" style="left:94px;top:197.5px;" width="10" height="6" viewBox="0 0 10 6"><path d="M.4 .5L4.8 5 9.2 .5" fill="none" stroke="#3b3b3b" stroke-width="1.1"/></svg>
<div class="r" style="left:119px;top:194px;width:2px;height:2px;background:#3b3b3b;"></div>
<div class="r" style="left:119px;top:198.3px;width:2px;height:2px;background:#3b3b3b;"></div>
<div class="r" style="left:119px;top:202.6px;width:2px;height:2px;background:#3b3b3b;"></div>
<div class="r" style="left:130px;top:186px;width:74px;height:26px;background:#fff;border:1px solid #d2d2d2;border-radius:4px;"></div>
<svg class="r" style="left:137.3px;top:193.2px;" width="12" height="12" viewBox="0 0 12 12"><path d="M.3 .3L11.5 11.5M11.5 .3L.3 11.5" stroke="#b9b9b9" stroke-width="1"/></svg>
<svg class="r" style="left:159px;top:193.2px;" width="16" height="12" viewBox="0 0 16 12"><path d="M.4 6.6L4.6 11 15.6 .4" fill="none" stroke="#b9b9b9" stroke-width="1"/></svg>
<span class="t" style="left:184.40px;top:189.00px;font-size:17px;color:#3b3b3b;transform:scaleX(1.1513);font-family:'Liberation Serif',serif;font-style:italic;-webkit-text-stroke:.25px #3b3b3b;">fx</span>
<div class="r" style="left:208px;top:186px;width:1150px;height:46px;background:#fff;border:1px solid #d2d2d2;border-radius:4px;"></div>
<span class="t" style="left:219.81px;top:193.00px;font-size:13px;color:#1b1b1b;transform:scaleX(0.9491);">CONSUMER ID</span>
<svg class="r" style="left:1343px;top:192.5px;" width="11" height="7" viewBox="0 0 11 7"><path d="M.5 6L5.5 1 10.5 6" fill="none" stroke="#3b3b3b" stroke-width="1.2"/></svg>
<div class="r" style="left:0px;top:239px;width:1345px;height:436px;background:#ffffff;"></div>
<div class="r" style="left:0px;top:239px;width:27px;height:20px;background:#f0f0f0;"></div>
<svg class="r" style="left:10px;top:243.5px;" width="12" height="11.5" viewBox="0 0 12 11.5"><path d="M12 0V11.5H0z" fill="#dcdcdc"/></svg>
<div class="r" style="left:28px;top:239px;width:734px;height:19px;background:#e1e1e1;"></div>
<div class="r" style="left:762px;top:239px;width:583px;height:19px;background:#efefef;"></div>
<div class="r" style="left:26px;top:258px;width:738px;height:1px;background:#aaa6aa;"></div>
<div class="r" style="left:764px;top:258px;width:581px;height:1px;background:#a6a6a6;"></div>
<div class="r" style="left:0px;top:258px;width:24px;height:1px;background:#c4c4c4;"></div>
<div class="r" style="left:27px;top:239px;width:1px;height:19px;background:#b0b0b0;"></div>
<div class="r" style="left:121px;top:239px;width:1px;height:19px;background:#bcbcbc;"></div>
<div class="r" style="left:574px;top:239px;width:1px;height:19px;background:#bcbcbc;"></div>
<div class="r" style="left:577px;top:239px;width:1px;height:19px;background:#bcbcbc;"></div>
<div class="r" style="left:651px;top:239px;width:1px;height:19px;background:#bcbcbc;"></div>
<div class="r" style="left:654px;top:239px;width:1px;height:19px;background:#bcbcbc;"></div>
<div class="r" style="left:762px;top:239px;width:1px;height:19px;background:#b4b4b4;"></div>
<div class="r" style="left:766px;top:240px;width:1px;height:18px;background:#dcdcdc;"></div>
<div class="r" style="left:828px;top:240px;width:1px;height:18px;background:#d4d4d4;"></div>
<div class="r" style="left:892px;top:240px;width:1px;height:18px;background:#d4d4d4;"></div>
<div class="r" style="left:956px;top:240px;width:1px;height:18px;background:#d4d4d4;"></div>
<div class="r" style="left:1020px;top:240px;width:1px;height:18px;background:#d4d4d4;"></div>
<div class="r" style="left:1084px;top:240px;width:1px;height:18px;background:#d4d4d4;"></div>
<div class="r" style="left:1148px;top:240px;width:1px;height:18px;background:#d4d4d4;"></div>
<div class="r" style="left:1212px;top:240px;width:1px;height:18px;background:#d4d4d4;"></div>
<div class="r" style="left:1276px;top:240px;width:1px;height:18px;background:#d4d4d4;"></div>
<div class="r" style="left:1340px;top:240px;width:1px;height:18px;background:#d4d4d4;"></div>
<span class="t" style="left:71.08px;top:244.00px;font-size:12px;color:#1e6b41;transform:scaleX(0.9114);">J</span>
<span class="t" style="left:343.67px;top:244.00px;font-size:12px;color:#1e6b41;transform:scaleX(1.0955);">K</span>
<span class="t" style="left:606.10px;top:244.00px;font-size:12px;color:#1e6b41;transform:scaleX(1.0274);">AB</span>
<span class="t" style="left:700.35px;top:244.00px;font-size:12px;color:#1e6b41;transform:scaleX(1.0306);">AX</span>
<span class="t" style="left:788.86px;top:244.00px;font-size:12px;color:#3a3a3a;transform:scaleX(0.9662);">CC</span>
<span class="t" style="left:852.42px;top:244.00px;font-size:12px;color:#3a3a3a;transform:scaleX(1.0229);">CD</span>
<span class="t" style="left:917.47px;top:244.00px;font-size:12px;color:#3a3a3a;transform:scaleX(0.9357);">CE</span>
<span class="t" style="left:981.61px;top:244.00px;font-size:12px;color:#3a3a3a;transform:scaleX(0.9547);">CF</span>
<span class="t" style="left:1044.44px;top:244.00px;font-size:12px;color:#3a3a3a;transform:scaleX(1.0036);">CG</span>
<span class="t" style="left:1108.41px;top:244.00px;font-size:12px;color:#3a3a3a;transform:scaleX(1.0512);">CH</span>
<span class="t" style="left:1175.09px;top:244.00px;font-size:12px;color:#3a3a3a;transform:scaleX(1.0818);">CI</span>
<span class="t" style="left:1238.68px;top:244.00px;font-size:12px;color:#3a3a3a;transform:scaleX(0.9223);">CJ</span>
<span class="t" style="left:1301.00px;top:244.00px;font-size:12px;color:#3a3a3a;transform:scaleX(0.9701);">CK</span>
<div class="r" style="left:0px;top:259px;width:24px;height:380px;background:#e1e1e1;"></div>
<div class="r" style="left:0px;top:639px;width:25px;height:36px;background:#efefef;"></div>
<div class="r" style="left:27px;top:259px;width:736px;height:19px;background:#5a8a3a;"></div>
<div class="r" style="left:766px;top:259px;width:578px;height:20px;background:#70ad47;"></div>
<span class="t" style="left:9.15px;top:264.00px;font-size:12px;color:#1e6b41;transform:scaleX(1.0901);">8</span>
<div class="r" style="left:0px;top:278px;width:24px;height:1px;background:#cfcfcf;"></div>
<span class="t" style="left:38.95px;top:263.00px;font-size:13px;color:#0a0a0a;transform:scaleX(0.9644);">1000860463</span>
<span class="t" style="left:235.60px;top:263.00px;font-size:13px;color:#0a0a0a;transform:scaleX(1.0609);">Smart City Field Element Asom Kristi</span>
<span class="t" style="left:585.47px;top:263.00px;font-size:13px;color:#0a0a0a;transform:scaleX(0.9931);">11046234</span>
<span class="t" style="left:675.65px;top:263.00px;font-size:13px;color:#0a0a0a;transform:scaleX(1.0037);">02-02-2026</span>
<svg class="r" style="left:27px;top:259px;" width="5" height="5" viewBox="0 0 5 5"><path d="M0 0H5.200L0 5.200z" fill="#056c08"/></svg>
<svg class="r" style="left:576px;top:259px;" width="5" height="5" viewBox="0 0 5 5"><path d="M0 0H5.200L0 5.200z" fill="#056c08"/></svg>
<div class="r" style="left:27px;top:278px;width:736px;height:1px;background:#000;"></div>
<div class="r" style="left:27px;top:279px;width:736px;height:19px;background:#c9c9c9;"></div>
<span class="t" style="left:9.07px;top:284.00px;font-size:12px;color:#1e6b41;transform:scaleX(1.1146);">9</span>
<div class="r" style="left:0px;top:298px;width:24px;height:1px;background:#cfcfcf;"></div>
<span class="t" style="left:38.95px;top:283.00px;font-size:13px;color:#d0121f;transform:scaleX(0.9619);">1000860464</span>
<span class="t" style="left:159.30px;top:283.00px;font-size:13px;color:#d0121f;transform:scaleX(1.0674);">Smart City Field Element Lumsohra Nongrimmaw Nongkynrih</span>
<span class="t" style="left:585.47px;top:283.00px;font-size:13px;color:#d0121f;transform:scaleX(0.9965);">11046233</span>
<span class="t" style="left:675.20px;top:283.00px;font-size:13px;color:#d0121f;transform:scaleX(1.0105);">16-01-2026</span>
<svg class="r" style="left:27px;top:279px;" width="5" height="5" viewBox="0 0 5 5"><path d="M0 0H5.200L0 5.200z" fill="#056c08"/></svg>
<svg class="r" style="left:576px;top:279px;" width="5" height="5" viewBox="0 0 5 5"><path d="M0 0H5.200L0 5.200z" fill="#056c08"/></svg>
<div class="r" style="left:27px;top:298px;width:736px;height:1px;background:#000;"></div>
<div class="r" style="left:27px;top:299px;width:736px;height:19px;background:#5a8a3a;"></div>
<div class="r" style="left:766px;top:298px;width:578px;height:21px;background:#70ad47;"></div>
<span class="t" style="left:5.36px;top:304.00px;font-size:12px;color:#1e6b41;transform:scaleX(1.0789);">10</span>
<div class="r" style="left:0px;top:318px;width:24px;height:1px;background:#cfcfcf;"></div>
<span class="t" style="left:38.95px;top:303.00px;font-size:13px;color:#0a0a0a;transform:scaleX(0.9644);">1000863068</span>
<div class="r" style="left:122px;top:299px;width:453px;height:19px;overflow:hidden">
<span class="t" style="left:-0.85px;top:4.00px;font-size:13px;color:#0a0a0a;transform:scaleX(1.0746);">Smart City Field Element Nongrim Hills Junction Nongshilliang Bifurcation</span>
</div>
<span class="t" style="left:585.47px;top:303.00px;font-size:13px;color:#0a0a0a;transform:scaleX(0.9965);">11046235</span>
<span class="t" style="left:675.65px;top:303.00px;font-size:13px;color:#0a0a0a;transform:scaleX(1.0037);">02-02-2026</span>
<svg class="r" style="left:27px;top:299px;" width="5" height="5" viewBox="0 0 5 5"><path d="M0 0H5.200L0 5.200z" fill="#056c08"/></svg>
<svg class="r" style="left:576px;top:299px;" width="5" height="5" viewBox="0 0 5 5"><path d="M0 0H5.200L0 5.200z" fill="#056c08"/></svg>
<div class="r" style="left:27px;top:318px;width:736px;height:1px;background:#000;"></div>
<div class="r" style="left:27px;top:319px;width:736px;height:19px;background:#5a8a3a;"></div>
<div class="r" style="left:766px;top:318px;width:578px;height:21px;background:#70ad47;"></div>
<span class="t" style="left:5.27px;top:324.00px;font-size:12px;color:#1e6b41;transform:scaleX(1.1783);">11</span>
<div class="r" style="left:0px;top:338px;width:24px;height:1px;background:#cfcfcf;"></div>
<span class="t" style="left:38.95px;top:323.00px;font-size:13px;color:#0a0a0a;transform:scaleX(0.9653);">1000863069</span>
<span class="t" style="left:206.16px;top:323.00px;font-size:13px;color:#0a0a0a;transform:scaleX(1.0545);">Smart City Field Element Fire Brigade Junction</span>
<span class="t" style="left:585.46px;top:323.00px;font-size:13px;color:#0a0a0a;transform:scaleX(0.9976);">11045779</span>
<span class="t" style="left:675.65px;top:323.00px;font-size:13px;color:#0a0a0a;transform:scaleX(1.0037);">02-02-2026</span>
<svg class="r" style="left:27px;top:319px;" width="5" height="5" viewBox="0 0 5 5"><path d="M0 0H5.200L0 5.200z" fill="#056c08"/></svg>
<svg class="r" style="left:576px;top:319px;" width="5" height="5" viewBox="0 0 5 5"><path d="M0 0H5.200L0 5.200z" fill="#056c08"/></svg>
<div class="r" style="left:27px;top:338px;width:736px;height:1px;background:#000;"></div>
<div class="r" style="left:27px;top:339px;width:736px;height:19px;background:#5a8a3a;"></div>
<div class="r" style="left:766px;top:338px;width:578px;height:21px;background:#70ad47;"></div>
<span class="t" style="left:5.35px;top:344.00px;font-size:12px;color:#1e6b41;transform:scaleX(1.0903);">12</span>
<div class="r" style="left:0px;top:358px;width:24px;height:1px;background:#cfcfcf;"></div>
<span class="t" style="left:38.95px;top:343.00px;font-size:13px;color:#0a0a0a;transform:scaleX(0.9636);">1000863070</span>
<span class="t" style="left:171.30px;top:343.00px;font-size:13px;color:#0a0a0a;transform:scaleX(1.0602);">Smart City Field Element Nongthymmai Dum Dum Juction</span>
<span class="t" style="left:585.46px;top:343.00px;font-size:13px;color:#0a0a0a;transform:scaleX(0.9976);">11045241</span>
<span class="t" style="left:675.65px;top:343.00px;font-size:13px;color:#0a0a0a;transform:scaleX(1.0037);">02-02-2026</span>
<svg class="r" style="left:27px;top:339px;" width="5" height="5" viewBox="0 0 5 5"><path d="M0 0H5.200L0 5.200z" fill="#056c08"/></svg>
<svg class="r" style="left:576px;top:339px;" width="5" height="5" viewBox="0 0 5 5"><path d="M0 0H5.200L0 5.200z" fill="#056c08"/></svg>
<div class="r" style="left:27px;top:358px;width:736px;height:1px;background:#000;"></div>
<div class="r" style="left:27px;top:359px;width:736px;height:19px;background:#5a8a3a;"></div>
<div class="r" style="left:766px;top:358px;width:578px;height:21px;background:#70ad47;"></div>
<span class="t" style="left:5.35px;top:364.00px;font-size:12px;color:#1e6b41;transform:scaleX(1.0846);">13</span>
<div class="r" style="left:0px;top:378px;width:24px;height:1px;background:#cfcfcf;"></div>
<span class="t" style="left:38.95px;top:363.00px;font-size:13px;color:#0a0a0a;transform:scaleX(0.9653);">1000863072</span>
<span class="t" style="left:153.45px;top:363.00px;font-size:13px;color:#0a0a0a;transform:scaleX(1.0635);">Smart City Field Element Health Complex Junction Laitumkhrah</span>
<span class="t" style="left:585.46px;top:363.00px;font-size:13px;color:#0a0a0a;transform:scaleX(0.9976);">11045247</span>
<span class="t" style="left:675.65px;top:363.00px;font-size:13px;color:#0a0a0a;transform:scaleX(1.0037);">02-02-2026</span>
<svg class="r" style="left:27px;top:359px;" width="5" height="5" viewBox="0 0 5 5"><path d="M0 0H5.200L0 5.200z" fill="#056c08"/></svg>
<svg class="r" style="left:576px;top:359px;" width="5" height="5" viewBox="0 0 5 5"><path d="M0 0H5.200L0 5.200z" fill="#056c08"/></svg>
<div class="r" style="left:27px;top:378px;width:736px;height:1px;background:#000;"></div>
<div class="r" style="left:27px;top:379px;width:736px;height:19px;background:#5a8a3a;"></div>
<div class="r" style="left:766px;top:378px;width:578px;height:21px;background:#70ad47;"></div>
<span class="t" style="left:5.37px;top:384.00px;font-size:12px;color:#1e6b41;transform:scaleX(1.0679);">14</span>
<div class="r" style="left:0px;top:398px;width:24px;height:1px;background:#cfcfcf;"></div>
<span class="t" style="left:38.95px;top:383.00px;font-size:13px;color:#0a0a0a;transform:scaleX(0.9644);">1000863073</span>
<span class="t" style="left:195.71px;top:383.00px;font-size:13px;color:#0a0a0a;transform:scaleX(1.0520);">Smart City Field Element Laitumkhrah Beat House</span>
<span class="t" style="left:585.46px;top:383.00px;font-size:13px;color:#0a0a0a;transform:scaleX(0.9976);">11045249</span>
<span class="t" style="left:675.65px;top:383.00px;font-size:13px;color:#0a0a0a;transform:scaleX(1.0037);">02-02-2026</span>
<svg class="r" style="left:27px;top:379px;" width="5" height="5" viewBox="0 0 5 5"><path d="M0 0H5.200L0 5.200z" fill="#056c08"/></svg>
<svg class="r" style="left:576px;top:379px;" width="5" height="5" viewBox="0 0 5 5"><path d="M0 0H5.200L0 5.200z" fill="#056c08"/></svg>
<div class="r" style="left:27px;top:398px;width:736px;height:1px;background:#000;"></div>
<div class="r" style="left:27px;top:399px;width:736px;height:19px;background:#5a8a3a;"></div>
<div class="r" style="left:766px;top:398px;width:578px;height:21px;background:#70ad47;"></div>
<span class="t" style="left:5.35px;top:404.00px;font-size:12px;color:#1e6b41;transform:scaleX(1.0846);">15</span>
<div class="r" style="left:0px;top:418px;width:24px;height:1px;background:#cfcfcf;"></div>
<span class="t" style="left:38.95px;top:403.00px;font-size:13px;color:#0a0a0a;transform:scaleX(0.9644);">1000863075</span>
<span class="t" style="left:204.31px;top:403.00px;font-size:13px;color:#0a0a0a;transform:scaleX(1.0509);">Smart City Feld Element Malki Parking Lot New</span>
<span class="t" style="left:585.47px;top:403.00px;font-size:13px;color:#0a0a0a;transform:scaleX(0.9931);">11045244</span>
<span class="t" style="left:675.65px;top:403.00px;font-size:13px;color:#0a0a0a;transform:scaleX(1.0037);">02-02-2026</span>
<svg class="r" style="left:27px;top:399px;" width="5" height="5" viewBox="0 0 5 5"><path d="M0 0H5.200L0 5.200z" fill="#056c08"/></svg>
<svg class="r" style="left:576px;top:399px;" width="5" height="5" viewBox="0 0 5 5"><path d="M0 0H5.200L0 5.200z" fill="#056c08"/></svg>
<div class="r" style="left:27px;top:418px;width:736px;height:1px;background:#000;"></div>
<div class="r" style="left:27px;top:419px;width:736px;height:19px;background:#c9c9c9;"></div>
<span class="t" style="left:5.35px;top:424.00px;font-size:12px;color:#1e6b41;transform:scaleX(1.0846);">16</span>
<div class="r" style="left:0px;top:438px;width:24px;height:1px;background:#cfcfcf;"></div>
<span class="t" style="left:38.95px;top:423.00px;font-size:13px;color:#d0121f;transform:scaleX(0.9653);">1000863077</span>
<span class="t" style="left:160.35px;top:423.00px;font-size:13px;color:#d0121f;transform:scaleX(1.0582);">Smart City Field Element Nongshilliang Blk5 Near Water Tank</span>
<span class="t" style="left:585.47px;top:423.00px;font-size:13px;color:#d0121f;transform:scaleX(0.9954);">11045250</span>
<span class="t" style="left:675.20px;top:423.00px;font-size:13px;color:#d0121f;transform:scaleX(1.0105);">16-01-2026</span>
<svg class="r" style="left:27px;top:419px;" width="5" height="5" viewBox="0 0 5 5"><path d="M0 0H5.200L0 5.200z" fill="#056c08"/></svg>
<svg class="r" style="left:576px;top:419px;" width="5" height="5" viewBox="0 0 5 5"><path d="M0 0H5.200L0 5.200z" fill="#056c08"/></svg>
<div class="r" style="left:27px;top:438px;width:736px;height:1px;background:#000;"></div>
<div class="r" style="left:27px;top:439px;width:736px;height:19px;background:#5a8a3a;"></div>
<div class="r" style="left:766px;top:438px;width:578px;height:21px;background:#70ad47;"></div>
<span class="t" style="left:5.35px;top:444.00px;font-size:12px;color:#1e6b41;transform:scaleX(1.0903);">17</span>
<div class="r" style="left:0px;top:458px;width:24px;height:1px;background:#cfcfcf;"></div>
<span class="t" style="left:38.95px;top:443.00px;font-size:13px;color:#0a0a0a;transform:scaleX(0.9644);">1000863078</span>
<span class="t" style="left:198.40px;top:443.00px;font-size:13px;color:#0a0a0a;transform:scaleX(1.0591);">Smart City Field Element Nongrim Hills Near Nec</span>
<span class="t" style="left:585.47px;top:443.00px;font-size:13px;color:#0a0a0a;transform:scaleX(0.9965);">11045248</span>
<span class="t" style="left:675.65px;top:443.00px;font-size:13px;color:#0a0a0a;transform:scaleX(1.0037);">02-02-2026</span>
<svg class="r" style="left:27px;top:439px;" width="5" height="5" viewBox="0 0 5 5"><path d="M0 0H5.200L0 5.200z" fill="#056c08"/></svg>
<svg class="r" style="left:576px;top:439px;" width="5" height="5" viewBox="0 0 5 5"><path d="M0 0H5.200L0 5.200z" fill="#056c08"/></svg>
<div class="r" style="left:27px;top:458px;width:736px;height:1px;background:#000;"></div>
<div class="r" style="left:27px;top:459px;width:736px;height:19px;background:#5a8a3a;"></div>
<div class="r" style="left:766px;top:458px;width:578px;height:21px;background:#70ad47;"></div>
<span class="t" style="left:5.35px;top:464.00px;font-size:12px;color:#1e6b41;transform:scaleX(1.0846);">18</span>
<div class="r" style="left:0px;top:478px;width:24px;height:1px;background:#cfcfcf;"></div>
<span class="t" style="left:38.95px;top:463.00px;font-size:13px;color:#0a0a0a;transform:scaleX(0.9644);">1000863083</span>
<span class="t" style="left:207.01px;top:463.00px;font-size:13px;color:#0a0a0a;transform:scaleX(1.0537);">Smart City Field Element Dhanketi Parking Lot</span>
<span class="t" style="left:585.47px;top:463.00px;font-size:13px;color:#0a0a0a;transform:scaleX(0.9965);">11045243</span>
<span class="t" style="left:675.65px;top:463.00px;font-size:13px;color:#0a0a0a;transform:scaleX(1.0037);">02-02-2026</span>
<svg class="r" style="left:27px;top:459px;" width="5" height="5" viewBox="0 0 5 5"><path d="M0 0H5.200L0 5.200z" fill="#056c08"/></svg>
<svg class="r" style="left:576px;top:459px;" width="5" height="5" viewBox="0 0 5 5"><path d="M0 0H5.200L0 5.200z" fill="#056c08"/></svg>
<div class="r" style="left:27px;top:478px;width:736px;height:1px;background:#000;"></div>
<div class="r" style="left:27px;top:479px;width:736px;height:19px;background:#5a8a3a;"></div>
<div class="r" style="left:766px;top:478px;width:578px;height:21px;background:#70ad47;"></div>
<span class="t" style="left:5.35px;top:484.00px;font-size:12px;color:#1e6b41;transform:scaleX(1.0903);">19</span>
<div class="r" style="left:0px;top:498px;width:24px;height:1px;background:#cfcfcf;"></div>
<span class="t" style="left:38.95px;top:483.00px;font-size:13px;color:#0a0a0a;transform:scaleX(0.9644);">1000863085</span>
<span class="t" style="left:195.21px;top:483.00px;font-size:13px;color:#0a0a0a;transform:scaleX(1.0530);">Smart City Field Element Fire Brigade Trafic Booth</span>
<span class="t" style="left:585.46px;top:483.00px;font-size:13px;color:#0a0a0a;transform:scaleX(0.9976);">11045227</span>
<span class="t" style="left:675.65px;top:483.00px;font-size:13px;color:#0a0a0a;transform:scaleX(1.0037);">02-02-2026</span>
<svg class="r" style="left:27px;top:479px;" width="5" height="5" viewBox="0 0 5 5"><path d="M0 0H5.200L0 5.200z" fill="#056c08"/></svg>
<svg class="r" style="left:576px;top:479px;" width="5" height="5" viewBox="0 0 5 5"><path d="M0 0H5.200L0 5.200z" fill="#056c08"/></svg>
<div class="r" style="left:27px;top:498px;width:736px;height:1px;background:#000;"></div>
<div class="r" style="left:27px;top:499px;width:736px;height:19px;background:#5a8a3a;"></div>
<div class="r" style="left:766px;top:498px;width:578px;height:21px;background:#70ad47;"></div>
<span class="t" style="left:5.71px;top:504.00px;font-size:12px;color:#1e6b41;transform:scaleX(1.0517);">20</span>
<div class="r" style="left:0px;top:518px;width:24px;height:1px;background:#cfcfcf;"></div>
<span class="t" style="left:38.95px;top:503.00px;font-size:13px;color:#0a0a0a;transform:scaleX(0.9644);">1000863086</span>
<span class="t" style="left:214.25px;top:503.00px;font-size:13px;color:#0a0a0a;transform:scaleX(1.0626);">Smart City Field Element Laitumkhrah Point</span>
<span class="t" style="left:585.47px;top:503.00px;font-size:13px;color:#0a0a0a;transform:scaleX(0.9965);">11045246</span>
<span class="t" style="left:675.65px;top:503.00px;font-size:13px;color:#0a0a0a;transform:scaleX(1.0037);">02-02-2026</span>
<svg class="r" style="left:27px;top:499px;" width="5" height="5" viewBox="0 0 5 5"><path d="M0 0H5.200L0 5.200z" fill="#056c08"/></svg>
<svg class="r" style="left:576px;top:499px;" width="5" height="5" viewBox="0 0 5 5"><path d="M0 0H5.200L0 5.200z" fill="#056c08"/></svg>
<div class="r" style="left:27px;top:518px;width:736px;height:1px;background:#000;"></div>
<div class="r" style="left:27px;top:519px;width:736px;height:19px;background:#5a8a3a;"></div>
<div class="r" style="left:766px;top:518px;width:578px;height:21px;background:#70ad47;"></div>
<span class="t" style="left:5.70px;top:524.00px;font-size:12px;color:#1e6b41;transform:scaleX(1.0624);">21</span>
<div class="r" style="left:0px;top:538px;width:24px;height:1px;background:#cfcfcf;"></div>
<span class="t" style="left:38.95px;top:523.00px;font-size:13px;color:#0a0a0a;transform:scaleX(0.9653);">1000863089</span>
<span class="t" style="left:148.41px;top:523.00px;font-size:13px;color:#0a0a0a;transform:scaleX(1.0410);">Smart City Field Element Laitumkhrah Main Road Near Don Bosco</span>
<span class="t" style="left:585.47px;top:523.00px;font-size:13px;color:#0a0a0a;transform:scaleX(0.9965);">11045245</span>
<span class="t" style="left:675.65px;top:523.00px;font-size:13px;color:#0a0a0a;transform:scaleX(1.0037);">02-02-2026</span>
<svg class="r" style="left:27px;top:519px;" width="5" height="5" viewBox="0 0 5 5"><path d="M0 0H5.200L0 5.200z" fill="#056c08"/></svg>
<svg class="r" style="left:576px;top:519px;" width="5" height="5" viewBox="0 0 5 5"><path d="M0 0H5.200L0 5.200z" fill="#056c08"/></svg>
<div class="r" style="left:27px;top:538px;width:736px;height:1px;background:#000;"></div>
<div class="r" style="left:27px;top:539px;width:736px;height:19px;background:#5a8a3a;"></div>
<div class="r" style="left:766px;top:538px;width:578px;height:21px;background:#70ad47;"></div>
<span class="t" style="left:5.70px;top:544.00px;font-size:12px;color:#1e6b41;transform:scaleX(1.0624);">22</span>
<div class="r" style="left:0px;top:558px;width:24px;height:1px;background:#cfcfcf;"></div>
<span class="t" style="left:38.95px;top:543.00px;font-size:13px;color:#0a0a0a;transform:scaleX(0.9636);">1000863090</span>
<span class="t" style="left:169.31px;top:543.00px;font-size:13px;color:#0a0a0a;transform:scaleX(1.0493);">Smart City Field Element Dhanketi Heiga Hotel Jowai Road</span>
<span class="t" style="left:585.46px;top:543.00px;font-size:13px;color:#0a0a0a;transform:scaleX(0.9976);">11045242</span>
<span class="t" style="left:675.65px;top:543.00px;font-size:13px;color:#0a0a0a;transform:scaleX(1.0037);">02-02-2026</span>
<svg class="r" style="left:27px;top:539px;" width="5" height="5" viewBox="0 0 5 5"><path d="M0 0H5.200L0 5.200z" fill="#056c08"/></svg>
<svg class="r" style="left:576px;top:539px;" width="5" height="5" viewBox="0 0 5 5"><path d="M0 0H5.200L0 5.200z" fill="#056c08"/></svg>
<div class="r" style="left:27px;top:558px;width:736px;height:1px;background:#000;"></div>
<div class="r" style="left:27px;top:559px;width:736px;height:19px;background:#5a8a3a;"></div>
<div class="r" style="left:766px;top:558px;width:578px;height:21px;background:#70ad47;"></div>
<span class="t" style="left:5.71px;top:564.00px;font-size:12px;color:#1e6b41;transform:scaleX(1.0570);">23</span>
<div class="r" style="left:0px;top:578px;width:24px;height:1px;background:#cfcfcf;"></div>
<span class="t" style="left:38.95px;top:563.00px;font-size:13px;color:#0a0a0a;transform:scaleX(0.9653);">1000863091</span>
<span class="t" style="left:163.41px;top:563.00px;font-size:13px;color:#0a0a0a;transform:scaleX(1.0557);">Smart City Field Element Dhanketi Opp. Wood Land Hospital</span>
<span class="t" style="left:585.47px;top:563.00px;font-size:13px;color:#0a0a0a;transform:scaleX(0.9954);">11045780</span>
<span class="t" style="left:675.65px;top:563.00px;font-size:13px;color:#0a0a0a;transform:scaleX(1.0037);">02-02-2026</span>
<svg class="r" style="left:27px;top:559px;" width="5" height="5" viewBox="0 0 5 5"><path d="M0 0H5.200L0 5.200z" fill="#056c08"/></svg>
<svg class="r" style="left:576px;top:559px;" width="5" height="5" viewBox="0 0 5 5"><path d="M0 0H5.200L0 5.200z" fill="#056c08"/></svg>
<div class="r" style="left:27px;top:578px;width:736px;height:1px;background:#000;"></div>
<div class="r" style="left:27px;top:579px;width:736px;height:19px;background:#c9c9c9;"></div>
<span class="t" style="left:5.71px;top:584.00px;font-size:12px;color:#1e6b41;transform:scaleX(1.0411);">24</span>
<div class="r" style="left:0px;top:598px;width:24px;height:1px;background:#cfcfcf;"></div>
<span class="t" style="left:38.95px;top:583.00px;font-size:13px;color:#d0121f;transform:scaleX(0.9644);">1000864148</span>
<span class="t" style="left:214.76px;top:583.00px;font-size:13px;color:#d0121f;transform:scaleX(1.0497);">Smart City Feld Element Donbosco Junction</span>
<span class="t" style="left:581.78px;top:583.00px;font-size:13px;color:#d0121f;transform:scaleX(1.0136);">nds003911</span>
<span class="t" style="left:675.20px;top:583.00px;font-size:13px;color:#d0121f;transform:scaleX(1.0105);">16-01-2026</span>
<svg class="r" style="left:27px;top:579px;" width="5" height="5" viewBox="0 0 5 5"><path d="M0 0H5.200L0 5.200z" fill="#056c08"/></svg>
<div class="r" style="left:27px;top:598px;width:736px;height:1px;background:#000;"></div>
<div class="r" style="left:27px;top:599px;width:736px;height:19px;background:#5a8a3a;"></div>
<div class="r" style="left:766px;top:598px;width:578px;height:21px;background:#70ad47;"></div>
<span class="t" style="left:5.71px;top:604.00px;font-size:12px;color:#1e6b41;transform:scaleX(1.0570);">25</span>
<div class="r" style="left:0px;top:618px;width:24px;height:1px;background:#cfcfcf;"></div>
<span class="t" style="left:38.95px;top:603.00px;font-size:13px;color:#0a0a0a;transform:scaleX(0.9653);">1000866967</span>
<span class="t" style="left:208.50px;top:603.00px;font-size:13px;color:#0a0a0a;transform:scaleX(1.0656);">Smart City Field Element Laitumkhrah Market</span>
<span class="t" style="left:585.47px;top:603.00px;font-size:13px;color:#0a0a0a;transform:scaleX(0.9965);">11046775</span>
<span class="t" style="left:675.65px;top:603.00px;font-size:13px;color:#0a0a0a;transform:scaleX(1.0037);">02-02-2026</span>
<svg class="r" style="left:27px;top:599px;" width="5" height="5" viewBox="0 0 5 5"><path d="M0 0H5.200L0 5.200z" fill="#056c08"/></svg>
<svg class="r" style="left:576px;top:599px;" width="5" height="5" viewBox="0 0 5 5"><path d="M0 0H5.200L0 5.200z" fill="#056c08"/></svg>
<div class="r" style="left:27px;top:618px;width:736px;height:1px;background:#000;"></div>
<div class="r" style="left:27px;top:619px;width:736px;height:19px;background:#5a8a3a;"></div>
<div class="r" style="left:766px;top:618px;width:578px;height:21px;background:#70ad47;"></div>
<span class="t" style="left:5.71px;top:624.00px;font-size:12px;color:#1e6b41;transform:scaleX(1.0570);">26</span>
<div class="r" style="left:0px;top:638px;width:24px;height:1px;background:#cfcfcf;"></div>
<span class="t" style="left:38.95px;top:623.00px;font-size:13px;color:#0a0a0a;transform:scaleX(0.9644);">1223000063</span>
<span class="t" style="left:220.53px;top:623.00px;font-size:13px;color:#0a0a0a;transform:scaleX(0.9177);">SMART CITY FIELD ELEMENT POLICE POINT</span>
<span class="t" style="left:585.47px;top:623.00px;font-size:13px;color:#0a0a0a;transform:scaleX(0.9965);">11046238</span>
<span class="t" style="left:675.65px;top:623.00px;font-size:13px;color:#0a0a0a;transform:scaleX(1.0037);">02-02-2026</span>
<svg class="r" style="left:27px;top:619px;" width="5" height="5" viewBox="0 0 5 5"><path d="M0 0H5.200L0 5.200z" fill="#056c08"/></svg>
<svg class="r" style="left:576px;top:619px;" width="5" height="5" viewBox="0 0 5 5"><path d="M0 0H5.200L0 5.200z" fill="#056c08"/></svg>
<div class="r" style="left:121px;top:259px;width:1px;height:378px;background:#000;"></div>
<div class="r" style="left:575px;top:259px;width:1px;height:378px;background:#000;"></div>
<div class="r" style="left:652px;top:259px;width:1px;height:378px;background:#000;"></div>
<div class="r" style="left:828px;top:279px;width:1px;height:19px;background:#d9d9d9;"></div>
<div class="r" style="left:892px;top:279px;width:1px;height:19px;background:#d9d9d9;"></div>
<div class="r" style="left:956px;top:279px;width:1px;height:19px;background:#d9d9d9;"></div>
<div class="r" style="left:1020px;top:279px;width:1px;height:19px;background:#d9d9d9;"></div>
<div class="r" style="left:1084px;top:279px;width:1px;height:19px;background:#d9d9d9;"></div>
<div class="r" style="left:1148px;top:279px;width:1px;height:19px;background:#d9d9d9;"></div>
<div class="r" style="left:1212px;top:279px;width:1px;height:19px;background:#d9d9d9;"></div>
<div class="r" style="left:1276px;top:279px;width:1px;height:19px;background:#d9d9d9;"></div>
<div class="r" style="left:1340px;top:279px;width:1px;height:19px;background:#d9d9d9;"></div>
<div class="r" style="left:1344px;top:279px;width:1px;height:19px;background:#d9d9d9;"></div>
<div class="r" style="left:828px;top:419px;width:1px;height:19px;background:#d9d9d9;"></div>
<div class="r" style="left:892px;top:419px;width:1px;height:19px;background:#d9d9d9;"></div>
<div class="r" style="left:956px;top:419px;width:1px;height:19px;background:#d9d9d9;"></div>
<div class="r" style="left:1020px;top:419px;width:1px;height:19px;background:#d9d9d9;"></div>
<div class="r" style="left:1084px;top:419px;width:1px;height:19px;background:#d9d9d9;"></div>
<div class="r" style="left:1148px;top:419px;width:1px;height:19px;background:#d9d9d9;"></div>
<div class="r" style="left:1212px;top:419px;width:1px;height:19px;background:#d9d9d9;"></div>
<div class="r" style="left:1276px;top:419px;width:1px;height:19px;background:#d9d9d9;"></div>
<div class="r" style="left:1340px;top:419px;width:1px;height:19px;background:#d9d9d9;"></div>
<div class="r" style="left:1344px;top:419px;width:1px;height:19px;background:#d9d9d9;"></div>
<div class="r" style="left:828px;top:579px;width:1px;height:19px;background:#d9d9d9;"></div>
<div class="r" style="left:892px;top:579px;width:1px;height:19px;background:#d9d9d9;"></div>
<div class="r" style="left:956px;top:579px;width:1px;height:19px;background:#d9d9d9;"></div>
<div class="r" style="left:1020px;top:579px;width:1px;height:19px;background:#d9d9d9;"></div>
<div class="r" style="left:1084px;top:579px;width:1px;height:19px;background:#d9d9d9;"></div>
<div class="r" style="left:1148px;top:579px;width:1px;height:19px;background:#d9d9d9;"></div>
<div class="r" style="left:1212px;top:579px;width:1px;height:19px;background:#d9d9d9;"></div>
<div class="r" style="left:1276px;top:579px;width:1px;height:19px;background:#d9d9d9;"></div>
<div class="r" style="left:1340px;top:579px;width:1px;height:19px;background:#d9d9d9;"></div>
<div class="r" style="left:1344px;top:579px;width:1px;height:19px;background:#d9d9d9;"></div>
<span class="t" style="left:5.70px;top:644.00px;font-size:12px;color:#3a3a3a;transform:scaleX(1.0624);">27</span>
<span class="t" style="left:5.71px;top:664.00px;font-size:12px;color:#3a3a3a;transform:scaleX(1.0570);">28</span>
<div class="r" style="left:0px;top:658px;width:1345px;height:1px;background:#d9d9d9;"></div>
<div class="r" style="left:0px;top:658px;width:25px;height:1px;background:#cfcfcf;"></div>
<div class="r" style="left:121px;top:640px;width:1px;height:35px;background:#d9d9d9;"></div>
<div class="r" style="left:575px;top:640px;width:1px;height:35px;background:#d9d9d9;"></div>
<div class="r" style="left:652px;top:640px;width:1px;height:35px;background:#d9d9d9;"></div>
<div class="r" style="left:764px;top:640px;width:1px;height:35px;background:#d9d9d9;"></div>
<div class="r" style="left:828px;top:640px;width:1px;height:35px;background:#d9d9d9;"></div>
<div class="r" style="left:892px;top:640px;width:1px;height:35px;background:#d9d9d9;"></div>
<div class="r" style="left:956px;top:640px;width:1px;height:35px;background:#d9d9d9;"></div>
<div class="r" style="left:1020px;top:640px;width:1px;height:35px;background:#d9d9d9;"></div>
<div class="r" style="left:1084px;top:640px;width:1px;height:35px;background:#d9d9d9;"></div>
<div class="r" style="left:1148px;top:640px;width:1px;height:35px;background:#d9d9d9;"></div>
<div class="r" style="left:1212px;top:640px;width:1px;height:35px;background:#d9d9d9;"></div>
<div class="r" style="left:1276px;top:640px;width:1px;height:35px;background:#d9d9d9;"></div>
<div class="r" style="left:1340px;top:640px;width:1px;height:35px;background:#d9d9d9;"></div>
<div class="r" style="left:1344px;top:640px;width:1px;height:35px;background:#d9d9d9;"></div>
<div class="r" style="left:25px;top:640px;width:1px;height:35px;background:#b8b8b8;"></div>
<div class="r" style="left:24px;top:257px;width:2px;height:383px;background:#0f703c;"></div>
<div class="r" style="left:26px;top:259px;width:1px;height:379px;background:#fff;"></div>
<div class="r" style="left:24px;top:638px;width:742px;height:2px;background:#0f703c;"></div>
<div class="r" style="left:27px;top:637px;width:736px;height:1px;background:#fff;"></div>
<div class="r" style="left:764px;top:259px;width:2px;height:381px;background:#0f703c;"></div>
<div class="r" style="left:763px;top:259px;width:1px;height:379px;background:#fff;"></div>
<div class="r" style="left:761px;top:635px;width:6px;height:6px;background:#fff;"></div>
<div class="r" style="left:762px;top:636px;width:5px;height:5px;background:#0f703c;"></div>
<div class="r" style="left:768px;top:642px;width:22px;height:22px;background:#fff;border:1px solid #217346;"></div>
<svg class="r" style="left:771px;top:645px;" width="16" height="16" viewBox="0 0 16 16"><path d="M7.900 2.300H14.800V13.600H1.300V9.900M8.200 4.200H14.800" fill="none" stroke="#3b3b3b" stroke-width="1"/><path d="M6.600 8.400L8 5.600 8.600 8.400z" fill="#b8b8b8"/><rect x="3.800" y="8.400" width="8.500" height="3.200" fill="#f4f4f4" stroke="#4a4a4a" stroke-width="1"/><path d="M3.400 .9H7.100L5.700 3.600H7.100L1.600 9H.9L2.500 5.700H.9z" fill="#ea7a10"/></svg>
<div class="r" style="left:1347px;top:240px;width:17px;height:436px;background:#f4f4f4;border-radius:8.500px;"></div>
<svg class="r" style="left:1350.8px;top:243.8px;" width="10" height="7" viewBox="0 0 10 7"><path d="M5 .3L9.700 6.700H.3z" fill="#767676"/></svg>
<div class="r" style="left:1351px;top:361px;width:9px;height:300px;background:#727272;border-radius:4.5px;"></div>
<svg class="r" style="left:1351px;top:665.5px;" width="10" height="7" viewBox="0 0 10 7"><path d="M.3 .3H9.7L5 6.6z" fill="#767676"/></svg>
<div class="r" style="left:0px;top:674px;width:1345px;height:1px;background:#d6d6d6;"></div>
<div class="r" style="left:0px;top:675px;width:1366px;height:31px;background:#f0f0f0;"></div>
<svg class="r" style="left:28px;top:684.5px;" width="8" height="10" viewBox="0 0 8 10"><path d="M6.8 .5L1.2 5 6.8 9.5" fill="none" stroke="#a8a8a8" stroke-width="1.2"/></svg>
<svg class="r" style="left:60.5px;top:684.5px;" width="8" height="10" viewBox="0 0 8 10"><path d="M1.2 .5L6.8 5 1.2 9.5" fill="none" stroke="#a8a8a8" stroke-width="1.2"/></svg>
<div class="r" style="left:115px;top:674px;width:59px;height:29px;background:#fff;border:1px solid #d9d9d9;border-top:none;border-radius:0 0 6px 6px;"></div>
<div class="r" style="left:111px;top:674px;width:5px;height:5px;background:#fff;background:radial-gradient(circle at 0 100%,#f0f0f0 0,#f0f0f0 3.800px,#d6d6d6 4.400px,#d6d6d6 4.900px,#fff 5.400px);"></div>
<div class="r" style="left:173px;top:674px;width:5px;height:5px;background:#fff;background:radial-gradient(circle at 100% 100%,#f0f0f0 0,#f0f0f0 3.800px,#d6d6d6 4.400px,#d6d6d6 4.900px,#fff 5.400px);"></div>
<span class="t" style="left:123.63px;top:681.00px;font-size:13px;color:#1b1b1b;transform:scaleX(1.0066);-webkit-text-stroke:.5px #1b1b1b;">Sheet1</span>
<div class="r" style="left:124px;top:697px;width:41px;height:2px;background:#107c41;"></div>
<div class="r" style="left:177px;top:681px;width:1px;height:18px;background:#c8c8c8;"></div>
<svg class="r" style="left:220px;top:684px;" width="11" height="11" viewBox="0 0 11 11"><path d="M5.5 0V11M0 5.5H11" stroke="#3b3b3b" stroke-width="1.1"/></svg>
<div class="r" style="left:821.3px;top:686.6px;width:1.6px;height:1.6px;background:#3b3b3b;"></div>
<div class="r" style="left:821.3px;top:690.5px;width:1.6px;height:1.6px;background:#3b3b3b;"></div>
<div class="r" style="left:821.3px;top:694.4px;width:1.6px;height:1.6px;background:#3b3b3b;"></div>
<div class="r" style="left:838px;top:681.5px;width:1508px;height:17px;background:#f6f6f6;border-radius:8.5px;width:508px;"></div>
<svg class="r" style="left:843px;top:685px;" width="7" height="9" viewBox="0 0 7 9"><path d="M6.8 .2V8.8L.3 4.5z" fill="#767676"/></svg>
<div class="r" style="left:861px;top:685px;width:469px;height:9px;background:#727272;border-radius:4.5px;"></div>
<svg class="r" style="left:1335.5px;top:685px;" width="7" height="9" viewBox="0 0 7 9"><path d="M.2 .2V8.8L6.7 4.5z" fill="#767676"/></svg>
<div class="r" style="left:0px;top:706px;width:1366px;height:22px;background:#f3f3f3;"></div>
<div class="r" style="left:0px;top:706px;width:1366px;height:1px;background:#fafafa;"></div>
<span class="t" style="left:11.54px;top:712.00px;font-size:11px;color:#444444;transform:scaleX(0.9831);">Ready</span>
<svg class="r" style="left:62px;top:710px;" width="14" height="14.5" viewBox="0 0 14 14.5"><circle cx="5.900" cy="2.300" r="1.800" fill="none" stroke="#2b2b2b" stroke-width="1.100"/><path d="M8.200 5.900L11 4.900C11.900 4.600 12.200 3.600 11.300 3.200 9.800 2.600 7.800 3.700 5.900 3.700S2 2.600 .5 3.200C-.4 3.600 -.1 4.600 .8 4.900L3.600 5.900V8.500L2.300 12.300C2 13.500 3.400 13.900 3.900 12.900L5.500 9.800" fill="none" stroke="#2b2b2b" stroke-width="1.100" stroke-linejoin="round" stroke-linecap="round"/><circle cx="5.900" cy="9.900" r=".8" fill="#2b2b2b"/><path d="M7.200 7.400L13.600 13.800M13.600 7.400L7.200 13.800" stroke="#2b2b2b" stroke-width="1.100"/></svg>
<span class="t" style="left:80.30px;top:712.00px;font-size:11px;color:#2b2b2b;transform:scaleX(1.0548);-webkit-text-stroke:.45px #2b2b2b;">Accessibility: Investigate</span>
<span class="t" style="left:768.50px;top:712.00px;font-size:11px;color:#444444;transform:scaleX(0.9831);">Average: 109369.505</span>
<span class="t" style="left:894.38px;top:712.00px;font-size:11px;color:#444444;transform:scaleX(1.0355);">Count: 1066</span>
<span class="t" style="left:971.90px;top:712.00px;font-size:11px;color:#444444;transform:scaleX(0.9936);">Sum: 11046320</span>
<div class="r" style="left:1066px;top:707px;width:40px;height:21px;background:#dddddd;"></div>
<svg class="r" style="left:1079px;top:710px;" width="13" height="13" viewBox="0 0 13 13"><rect width="13" height="13" fill="#3b3b3b"/><rect x="1" y="1" width="3.4" height="3.4" fill="#fff"/><rect x="1" y="5.1" width="3.4" height="3.4" fill="#fff"/><rect x="1" y="9.2" width="3.4" height="3.4" fill="#fff"/><rect x="5.1" y="1" width="3.4" height="3.4" fill="#fff"/><rect x="5.1" y="5.1" width="3.4" height="3.4" fill="#fff"/><rect x="5.1" y="9.2" width="3.4" height="3.4" fill="#fff"/><rect x="9.2" y="1" width="3.4" height="3.4" fill="#fff"/><rect x="9.2" y="5.1" width="3.4" height="3.4" fill="#fff"/><rect x="9.2" y="9.2" width="3.4" height="3.4" fill="#fff"/></svg>
<svg class="r" style="left:1119px;top:710px;" width="14" height="13" viewBox="0 0 14 13"><rect x=".5" y=".5" width="13" height="12" fill="none" stroke="#3b3b3b"/><rect x="3.5" y="3.5" width="7" height="6.5" fill="none" stroke="#3b3b3b"/><path d="M5 5.5h4M5 7.5h4" stroke="#3b3b3b" stroke-width=".8"/></svg>
<svg class="r" style="left:1159px;top:710px;" width="14" height="13" viewBox="0 0 14 13"><rect x=".5" y=".5" width="13" height="12" fill="none" stroke="#3b3b3b"/><path d="M.5 7.5H7.5V.5M4 .5V7.5" fill="none" stroke="#3b3b3b"/></svg>
<div class="r" style="left:1192.4px;top:716px;width:7.6px;height:1px;background:#3b3b3b;"></div>
<div class="r" style="left:1205px;top:716.3px;width:100px;height:1px;background:#6a6a6a;"></div>
<div class="r" style="left:1253.2px;top:712.2px;width:4.8px;height:10.6px;background:#666;"></div>
<svg class="r" style="left:1310px;top:713px;" width="8" height="8" viewBox="0 0 8 8"><path d="M4 0V8M0 4H8" stroke="#3b3b3b" stroke-width="1"/></svg>
<span class="t" style="left:1330.91px;top:712.00px;font-size:11px;color:#444444;transform:scaleX(0.9712);">100%</span>
<div class="r" style="left:0px;top:728px;width:1366px;height:40px;background:#24313a;background:linear-gradient(90deg,#1e2d36 0,#212f38 360px,#24323a 700px,#25323b 820px,#2c3035 870px,#3a302f 930px,#38302f 980px,#2c3238 1025px,#24384a 1070px,#25394a 1095px,#33343b 1120px,#3b3232 1150px,#3f3434 1260px,#3b3134 1366px);"></div>
<svg class="r" style="left:15.5px;top:739.5px;" width="17" height="17" viewBox="0 0 17 17"><path d="M0 2.4L6.9 1.4V8H0zM7.8 1.3L17 0V8H7.8zM0 8.9H6.9V15.5L0 14.6zM7.8 8.9H17V17L7.8 15.7z" fill="#fff"/></svg>
<div class="r" style="left:48px;top:728px;width:288px;height:40px;background:#f2f2f2;border-top:1px solid #b4b4b4;border-bottom:1px solid #bdbdbd;border-left:1px solid #dcdcdc;"></div>
<svg class="r" style="left:59px;top:738px;" width="19" height="19" viewBox="0 0 19 19"><circle cx="11.500" cy="7.500" r="5.300" fill="none" stroke="#1b1b1b" stroke-width="1.300"/><path d="M7.700 11.300L1.200 17.700" stroke="#1b1b1b" stroke-width="1.400"/></svg>
<span class="t" style="left:88.00px;top:741.00px;font-size:15px;color:#2b2b2b;transform:scaleX(0.9673);">Type here to search</span>
<div class="r" style="left:258px;top:729px;width:78px;height:39px;overflow:hidden">
<svg class="r" style="left:0px;top:0px;" width="78" height="39" viewBox="0 0 78 39"><defs><linearGradient id="sun" x1="0" y1="0" x2="0" y2="1"><stop offset="0" stop-color="#fdb32c"/><stop offset=".45" stop-color="#fbd596"/><stop offset=".8" stop-color="#f5e8d6"/><stop offset="1" stop-color="#f3e6d6"/></linearGradient>
<linearGradient id="hs" x1="0" y1="0" x2="0" y2="1"><stop offset="0" stop-color="#f0692a"/><stop offset=".6" stop-color="#e04a18"/><stop offset="1" stop-color="#e8541c"/></linearGradient></defs>
<circle cx="39.8" cy="23" r="23.7" fill="url(#sun)"/>
<path d="M12.200 -1V9M65.300 -1V5" stroke="#e2a53a" stroke-width="1"/>
<ellipse cx="12.200" cy="11.600" rx="5" ry="3.700" fill="#d9431a"/><ellipse cx="12.200" cy="11.600" rx="2" ry="3.700" fill="#e8632a"/><rect x="10.200" y="7.400" width="4" height="1.200" fill="#f2b31f"/><rect x="10.400" y="15" width="3.800" height="3.400" rx="1" fill="#f7c63c"/>
<ellipse cx="65.300" cy="9.500" rx="6.200" ry="4.700" fill="#d9431a"/><ellipse cx="65.300" cy="9.500" rx="2.600" ry="4.700" fill="#e8632a"/><rect x="62.800" y="4.400" width="5" height="1.300" fill="#f2b31f"/><rect x="62.600" y="14" width="5.600" height="4.400" rx="1.200" fill="#f7c63c"/>
<path d="M3.400 29C5 27.200 7.600 27 8.600 25c1.400-3.600 6.400-3.800 7.800-.6 2.600-.4 4.400 1.800 3.400 4.200-1 1.600-3.400 1.800-5 .8-1.400 1.400-3.800 1.400-5 .2-2 .8-5.600.6-6.400-.6z" fill="#df4a1b"/>
<g fill="#e34f1c"><circle cx="66.600" cy="26" r="2.600"/><circle cx="66.600" cy="20.600" r="1.300"/><circle cx="66.600" cy="31.400" r="1.300"/><circle cx="61.800" cy="23.300" r="1.300"/><circle cx="71.400" cy="23.300" r="1.300"/><circle cx="61.800" cy="28.700" r="1.300"/><circle cx="71.400" cy="28.700" r="1.300"/></g>
<circle cx="66.600" cy="26" r="4.300" fill="none" stroke="#e34f1c" stroke-width="1.300" stroke-dasharray="2.100 1.200"/>
<path d="M35.21 -0.23C34.23 0.14 33.98 1.06 32.44 2.54C30.90 4.02 28.38 5.74 27.52 7.15C26.66 8.56 27.40 9.00 28.14 9.61C28.88 10.22 29.98 10.22 31.21 10.22C32.44 10.22 33.43 9.30 34.29 9.61C35.15 9.92 35.89 10.59 35.52 11.76C35.15 12.93 33.55 14.34 32.44 15.45C31.33 16.56 31.09 17.05 29.98 17.3C28.87 17.55 28.14 16.62 26.91 16.68C25.68 16.74 24.88 16.62 23.83 17.6C22.78 18.58 21.93 20.18 21.68 21.6C21.43 23.02 22.11 23.82 22.6 24.68C23.09 25.54 23.59 25.85 24.14 25.91C24.69 25.97 25.31 25.84 25.37 24.98C25.43 24.12 24.39 22.64 24.45 21.6C24.51 20.56 24.57 19.88 25.68 19.76C26.79 19.64 28.81 20.13 29.98 20.99C31.15 21.85 31.77 22.46 31.52 24.06C31.27 25.66 29.86 26.52 28.75 28.98C27.64 31.44 26.04 34.82 25.98 36.36C25.92 37.90 27.15 37.90 28.44 36.67C29.73 35.44 31.02 32.36 32.44 30.21C33.86 28.06 34.29 26.96 35.52 25.91C36.75 24.86 37.24 25.23 38.59 24.98C39.94 24.73 41.05 24.37 42.28 24.68C43.51 24.99 43.82 25.54 44.74 26.52C45.66 27.50 46.77 28.49 46.89 29.6C47.01 30.71 46.53 30.71 45.36 32.06C44.19 33.41 41.36 35.44 41.05 36.36C40.74 37.28 42.16 37.53 43.82 36.67C45.48 35.81 48.18 33.60 49.35 32.06C50.52 30.52 49.23 29.10 49.66 28.98C50.09 28.86 50.83 29.96 51.51 31.44C52.19 32.92 52.18 35.31 53.04 36.36C53.90 37.41 55.32 37.65 55.81 36.67C56.30 35.69 55.68 33.35 55.5 31.44C55.32 29.53 55.44 29.11 54.89 27.14C54.34 25.17 53.29 23.45 52.74 21.6C52.19 19.75 52.43 19.14 52.12 17.91C51.81 16.68 51.20 16.37 51.2 15.45C51.20 14.53 51.44 13.91 52.12 13.3C52.80 12.69 53.60 12.38 54.58 12.38C55.56 12.38 56.24 12.44 57.04 13.3C57.84 14.16 58.21 15.02 58.58 16.68C58.95 18.34 58.58 20.31 58.89 21.6C59.20 22.89 59.69 22.77 60.12 23.14C60.55 23.51 61.29 23.14 61.04 23.45C60.79 23.76 59.75 24.56 58.89 24.68C58.03 24.80 57.47 24.80 56.73 24.06C55.99 23.32 55.69 22.22 55.2 20.99C54.71 19.76 55.25 18.77 54.27 17.91C53.29 17.05 51.94 16.99 50.28 16.68C48.62 16.37 47.57 16.37 45.97 16.37C44.37 16.37 43.51 17.36 42.28 16.68C41.05 16.00 40.56 14.71 39.82 12.99C39.08 11.27 38.96 10.04 38.59 8.07C38.22 6.10 38.23 4.63 37.98 3.15C37.73 1.67 37.91 1.37 37.36 0.69C36.81 0.01 36.19 -0.60 35.21 -0.23z" fill="url(#hs)"/>
<path d="M37.36 0.38C37.97 -0.05 40.07 0.57 41.05 1C42.03 1.43 42.28 2.11 42.28 2.54C42.28 2.97 40.56 2.41 41.05 3.15C41.54 3.89 43.76 5.18 44.74 6.23C45.72 7.28 46.09 7.83 45.97 8.38C45.85 8.93 44.38 8.31 44.13 8.99C43.88 9.67 44.99 11.08 44.74 11.76C44.49 12.44 43.39 11.64 42.9 12.38C42.41 13.12 42.65 14.77 42.28 15.45C41.91 16.13 41.48 16.25 41.05 15.76C40.62 15.27 40.56 14.53 40.13 12.99C39.70 11.45 39.33 10.04 38.9 8.07C38.47 6.10 38.29 4.69 37.98 3.15C37.67 1.61 36.75 0.81 37.36 0.38z" fill="#b4370f"/>
<path d="M20 39C22 37.400 27 37 31 37.400 33 33.600 40 33.400 42.400 36.400 45 35 50 35.400 52 37.400 56 37 61 37.400 63 39z" fill="#dd4a1a"/></svg>
</div>
<svg class="r" style="left:351.5px;top:739.5px;" width="17" height="16" viewBox="0 0 17 16"><rect x="1" y="5" width="10" height="6.200" fill="none" stroke="#fff" stroke-width="1.300"/><path d="M.6 2.800V.700H11.400V2.800M.6 13.400V15.400H11.400V13.400" fill="none" stroke="#fff" stroke-width="1.200"/><path d="M14.800 .2V4.600M14.800 9.800V15.800" stroke="#fff" stroke-width="1.300"/><rect x="13.700" y="5.400" width="2.300" height="3.400" fill="#fff"/></svg>
<svg class="r" style="left:399.5px;top:737.5px;" width="23" height="21" viewBox="0 0 23 21"><defs><linearGradient id="cp1" x1="0" y1="0" x2="1" y2="1"><stop offset="0" stop-color="#2f8be8"/><stop offset=".6" stop-color="#1b4fc4"/><stop offset="1" stop-color="#5b3fd0"/></linearGradient><linearGradient id="cp2" gradientUnits="userSpaceOnUse" x1="0" y1="2" x2="0" y2="19"><stop offset="0" stop-color="#2fb4e8"/><stop offset=".35" stop-color="#5fd068"/><stop offset=".65" stop-color="#f2cf2e"/><stop offset="1" stop-color="#f08a2c"/></linearGradient><linearGradient id="cp3" gradientUnits="userSpaceOnUse" x1="0" y1="2" x2="0" y2="19"><stop offset="0" stop-color="#a86cf2"/><stop offset=".5" stop-color="#e45cb4"/><stop offset="1" stop-color="#f5793b"/></linearGradient></defs>
<path d="M9 3.200H14.500L16.200 8" fill="none" stroke="url(#cp1)" stroke-width="5.200" stroke-linejoin="round" stroke-linecap="round"/>
<path d="M14 17.800H8.500L6.800 13" fill="none" stroke="#f0653a" stroke-width="5.200" stroke-linejoin="round" stroke-linecap="round"/>
<path d="M9.600 3.400H8.400L4.200 16.200" fill="none" stroke="url(#cp2)" stroke-width="5.600" stroke-linejoin="round" stroke-linecap="round"/>
<path d="M13.400 17.600H14.600L18.800 4.800" fill="none" stroke="url(#cp3)" stroke-width="5.600" stroke-linejoin="round" stroke-linecap="round"/></svg>
<svg class="r" style="left:447.5px;top:735.5px;" width="25" height="25" viewBox="0 0 25 25"><defs><linearGradient id="ed1" x1="0" y1="0" x2="1" y2="0"><stop offset="0" stop-color="#1ba0e8"/><stop offset=".55" stop-color="#35c1b8"/><stop offset="1" stop-color="#6bdc4e"/></linearGradient><linearGradient id="ed2" x1="0" y1="0" x2="0" y2="1"><stop offset="0" stop-color="#1d8fe0"/><stop offset="1" stop-color="#1557b8"/></linearGradient></defs>
<circle cx="12.500" cy="12.500" r="12.300" fill="url(#ed2)"/>
<path d="M.4 11C1.200 4.800 6.200 .2 12.600 .2c6.800 0 12.200 5 12.200 10.800 0 3.800-2.800 6.400-6.200 6.400-2.400 0-4-1-4-2.200 0-.8.900-1.200.9-2.800 0-2.800-2.900-5-6.300-5C4.800 7.400 1.400 9 .4 11z" fill="url(#ed1)"/>
<path d="M6.800 12.600c0 5 4 9.400 9.200 9.400 2.200 0 4.200-.6 5.800-1.800-2.200 3-5.600 4.600-9.300 4.600C5.700 24.800.2 19.300.2 12.500c0-.5 0-1 .1-1.500C1.400 9 4.800 7.400 9.200 7.400c-1.500 1.200-2.400 3-2.400 5.200z" fill="#1650a8" opacity=".85"/></svg>
<svg class="r" style="left:497.5px;top:738.5px;" width="22" height="18.5" viewBox="0 0 22 18.5"><path d="M0 1.400C0 .6.600 0 1.400 0h6.400l2 2H20.600c.8 0 1.400.6 1.400 1.400V4H0z" fill="#e8a923"/><rect x="0" y="3" width="22" height="15" rx="1" fill="#fcd462"/><path d="M4.200 18V11.200c0-.7.500-1.200 1.200-1.200h11.200c.7 0 1.200.5 1.200 1.200V18h-3.400v-4.400H7.600V18z" fill="#3c8fdd"/><rect x="0" y="16.800" width="22" height="1.400" fill="#e8a923" opacity=".6"/></svg>
<svg class="r" style="left:545.5px;top:736.5px;" width="24" height="24" viewBox="0 0 24 24"><path d="M7 6V3.400C7 2 8 1 9.400 1h5.200C16 1 17 2 17 3.400V6" fill="none" stroke="#2aa5e6" stroke-width="1.800"/><path d="M.4 5.600H23.600V20.400c0 1.800-1.200 3-3 3H3.400c-1.800 0-3-1.200-3-3z" fill="#f4f4f4"/><rect x="7" y="9.400" width="4.600" height="4.600" fill="#f05022"/><rect x="12.400" y="9.400" width="4.600" height="4.600" fill="#7fba00"/><rect x="7" y="14.800" width="4.600" height="4.600" fill="#01a4ef"/><rect x="12.400" y="14.800" width="4.600" height="4.600" fill="#ffb902"/></svg>
<svg class="r" style="left:595px;top:736.5px;" width="24" height="23" viewBox="0 0 24 23"><defs><linearGradient id="ol1" x1="0" y1="0" x2="1" y2="1"><stop offset="0" stop-color="#5fb4f5"/><stop offset="1" stop-color="#1a6fd8"/></linearGradient></defs>
<path d="M12 .4L22.600 7.200c.6.400 1 1 1 1.800v10.400c0 1.800-1.200 3-3 3H5.800c-1.600 0-2.600-1-2.600-2.600V9c0-.8.400-1.400 1-1.800z" fill="#3aa0f0"/>
<path d="M3.200 8.400L12 .4l10.800 7.400L12 15z" fill="#2255c8"/>
<path d="M5.600 6.600L14.400 3.200l8.200 5.400v2L12 17z" fill="#5c8df0" opacity=".9"/>
<path d="M23.600 10.200V19.400c0 1.800-1.200 3-3 3H7L23.600 10.200z" fill="#6cd0fa"/>
<path d="M3.200 12.600L20 22.400H5.800c-1.600 0-2.600-1-2.600-2.600z" fill="#2f8fe8"/>
<rect x="0" y="10.800" width="10" height="10" rx="2" fill="#1258c4"/><circle cx="5" cy="15.800" r="2.600" fill="none" stroke="#fff" stroke-width="1.500"/></svg>
<svg class="r" style="left:644px;top:735.5px;" width="26" height="27" viewBox="0 0 26 27"><circle cx="12" cy="12" r="11.800" fill="#fff"/>
<path d="M12 12L1.780 6.100A11.800 11.800 0 0 1 22.220 6.100z" fill="#e33b2e"/>
<path d="M12 12L22.220 6.100A11.800 11.800 0 0 1 12 23.800z" fill="#f9c21b"/>
<path d="M12 12L12 23.800A11.800 11.800 0 0 1 1.780 6.100z" fill="#2da94f"/>
<circle cx="12" cy="12" r="5.400" fill="#fff"/><circle cx="12" cy="12" r="4.300" fill="#3f86f4"/>
<circle cx="18" cy="18.500" r="8" fill="#1b8ad6"/></svg>
<span class="t" style="left:657.47px;top:749.00px;font-size:10.5px;color:#fff;transform:scaleX(1.1406);">R</span>
<svg class="r" style="left:693px;top:739.3px;" width="24" height="17.2" viewBox="0 0 24 17.2"><rect width="24" height="17.200" rx="4" fill="#fe0000"/><path d="M9.400 4.600V12.600L16.200 8.600z" fill="#fff"/></svg>
<svg class="r" style="left:742px;top:736px;" width="24" height="24" viewBox="0 0 24 24"><path d="M11 5.200C4.800 5.200.4 9.600.4 14.400c0 4 3.200 7 7.600 7 1.400 0 2.200-.6 2.200-1.600 0-1.200-.8-1.600-.8-2.800 0-1.200 1-2 2.400-2h3c3.600 0 6-1.800 6-4.600C20.800 7.600 16.600 5.200 11 5.200z" fill="#e6edf3"/>
<path d="M11 5.200C4.800 5.200.4 9.600.4 14.400c0 4 3.200 7 7.600 7 1.400 0 2.200-.6 2.200-1.600" fill="none" stroke="#b7c6d3" stroke-width=".8"/>
<circle cx="4.600" cy="13.800" r="1.900" fill="#e0433a"/><circle cx="7.600" cy="9.400" r="1.900" fill="#5cb648"/><circle cx="12.600" cy="8" r="1.900" fill="#f0a82e"/><circle cx="10.600" cy="15" r="1.500" fill="#5a6670"/>
<path d="M20.800 3.600L22.400 4.400 12.400 23.400 11 22.800z" fill="#e8963a"/><path d="M20.400 4.400C19.600 2.800 20 1 21.400.2c.8 1 2 1.600 2.400 2.600-.4 1-1.200 1.800-2 2.200z" fill="#d9b07c"/></svg>
<div class="r" style="left:779px;top:728px;width:48px;height:40px;background:#575554;"></div>
<svg class="r" style="left:791.5px;top:736.8px;" width="21" height="22" viewBox="0 0 21 22"><defs><linearGradient id="xl1" x1="0" y1="0" x2="0" y2="1"><stop offset="0" stop-color="#4cc25a"/><stop offset="1" stop-color="#0f6b36"/></linearGradient></defs>
<rect x="5" y="0" width="16" height="22" rx="2.400" fill="url(#xl1)"/><rect x="5" y="0" width="8" height="7" fill="#5fcf63"/><path d="M13 0h5.600c1.400 0 2.400 1 2.400 2.400V7H13z" fill="#9ae25e"/><rect x="13" y="7" width="8" height="7.500" fill="#2fa351"/>
<rect x="0" y="6" width="11.500" height="11.500" rx="2" fill="#107c41"/><path d="M3.200 8.800L8.300 14.800M8.300 8.800L3.200 14.800" stroke="#fff" stroke-width="1.600"/></svg>
<div class="r" style="left:489px;top:766px;width:40px;height:2px;background:#76b9ed;"></div>
<div class="r" style="left:636px;top:766px;width:40px;height:2px;background:#76b9ed;"></div>
<div class="r" style="left:734px;top:766px;width:31px;height:2px;background:#76b9ed;"></div>
<div class="r" style="left:766px;top:766px;width:8px;height:2px;background:#5b93c4;"></div>
<div class="r" style="left:779px;top:766px;width:48px;height:2px;background:#76b9ed;"></div>
<svg class="r" style="left:961.5px;top:737.8px;" width="21" height="21" viewBox="0 0 21 21"><defs><linearGradient id="sn" x1="0" y1="0" x2=".6" y2="1"><stop offset="0" stop-color="#fcc205"/><stop offset=".5" stop-color="#f9a406"/><stop offset="1" stop-color="#ee6f0a"/></linearGradient></defs><circle cx="10.500" cy="10.500" r="10.300" fill="url(#sn)"/></svg>
<div class="r" style="left:972px;top:736.3px;width:11.6px;height:11.6px;background:#c3272f;border-radius:50%;"></div>
<span class="t" style="left:975.09px;top:739.00px;font-size:9px;color:#fff;transform:scaleX(1.1111);font-weight:bold;">3</span>
<span class="t" style="left:992.26px;top:742.00px;font-size:13px;color:#fff;transform:scaleX(1.0015);">19°C</span>
<span class="t" style="left:1029.51px;top:742.00px;font-size:13px;color:#fff;transform:scaleX(1.0441);">Sunny</span>
<svg class="r" style="left:1092.5px;top:743.5px;" width="13" height="8" viewBox="0 0 13 8"><path d="M.6 7.200L6.500 1.200 12.400 7.200" fill="none" stroke="#fff" stroke-width="1.300"/></svg>
<svg class="r" style="left:1118px;top:739.5px;" width="11" height="17" viewBox="0 0 11 17"><path d="M1.800 3.600V2.400C1.800 1.400 2.600.6 3.600.6h3C7.600.6 8.400 1.400 8.400 2.400V3.600M1.800 13.400v1.200c0 1 .8 1.800 1.800 1.800h3c1 0 1.800-.8 1.800-1.800V13.400" fill="none" stroke="#fff" stroke-width="1"/><rect x=".6" y="5.600" width="6.400" height="5.800" rx="1" fill="none" stroke="#fff" stroke-width="1.100"/><path d="M7.200 7.800L10.200 6.200V10.800L7.200 9.200z" fill="none" stroke="#fff" stroke-width="1"/></svg>
<svg class="r" style="left:1139px;top:741px;" width="17" height="15" viewBox="0 0 17 15"><path d="M3.600 9.600C1.600 9.600.4 8.400.4 6.800.4 5.200 1.600 4 3.200 4 3.800 2 5.600.8 7.600.8c2.200 0 4 1.400 4.400 3.400 1.600.2 2.800 1.400 2.800 2.800 0 1.400-1 2.600-2.600 2.600z" fill="#e4e4e4"/><path d="M3.200 4c.8-.2 1.800 0 2.600.6L12 8.800" fill="none" stroke="#9a9a9a" stroke-width=".7"/><circle cx="12.200" cy="10.400" r="4.400" fill="#d61f2c"/><path d="M10.500 8.700L13.900 12.100M13.900 8.700L10.500 12.100" stroke="#fff" stroke-width="1.100"/></svg>
<svg class="r" style="left:1163px;top:741.5px;" width="17" height="15" viewBox="0 0 17 15"><rect x="3.800" y=".6" width="11.700" height="9.600" fill="none" stroke="#fff" stroke-width="1.100"/><path d="M9.400 10.200V13.100M2.400 5V13.100H11.600" fill="none" stroke="#fff" stroke-width="1.100"/><rect x=".5" y="1" width="3.800" height="4" fill="#3a3232" stroke="#fff" stroke-width="1"/><rect x="1.700" y="2.200" width="1.400" height="1.400" fill="#fff"/></svg>
<svg class="r" style="left:1187px;top:741.5px;" width="17" height="15" viewBox="0 0 17 15"><path d="M.6 5.200H3.600L7.400 1.600V13.400L3.600 9.800H.6z" fill="none" stroke="#fff" stroke-width="1.100" stroke-linejoin="round"/><path d="M9.600 5.200c1 1.400 1 3.200 0 4.600M11.800 3.200c2 2.600 2 6 0 8.600M14 1.400c2.800 3.600 2.800 8.600 0 12.200" fill="none" stroke="#fff" stroke-width="1"/></svg>
<span class="t" style="left:1212.74px;top:742.00px;font-size:12px;color:#fff;transform:scaleX(0.9144);">ENG</span>
<span class="t" style="left:1253.46px;top:733.00px;font-size:12px;color:#fff;transform:scaleX(0.9565);">12:43 PM</span>
<span class="t" style="left:1248.46px;top:751.00px;font-size:12px;color:#fff;transform:scaleX(0.9563);">17-02-2026</span>
<svg class="r" style="left:1325px;top:740px;" width="25" height="23" viewBox="0 0 25 23"><path d="M.6 .6H15.800V11.400H6.200L3 14.400V11.400H.6z" fill="#fff"/><path d="M3.200 3.600H13.200M3.200 6H13.200M3.200 8.400H10" stroke="#33363d" stroke-width="1"/><circle cx="15.600" cy="14.400" r="7.600" fill="#3a3235" stroke="#fff" stroke-width="1.100"/></svg>
<span class="t" style="left:1336.65px;top:749.00px;font-size:12px;color:#fff;transform:scaleX(1.1915);font-weight:bold;">2</span>
<div class="r" style="left:1361.5px;top:728px;width:1px;height:40px;background:#6a6a6a;"></div>
</body></html>
